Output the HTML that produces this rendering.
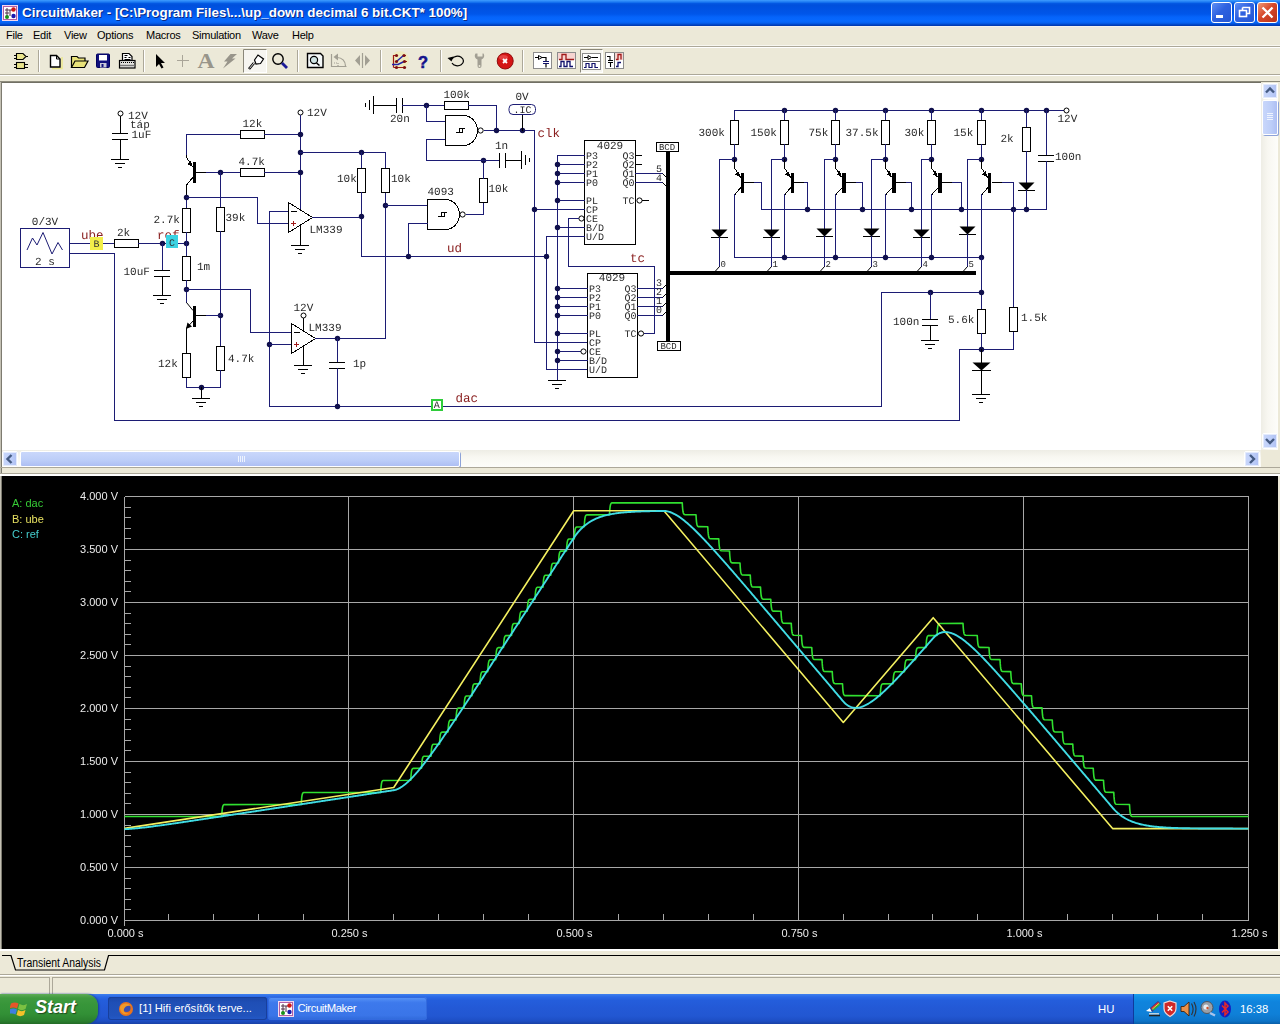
<!DOCTYPE html>
<html><head><meta charset="utf-8"><title>CircuitMaker</title>
<style>

html,body{margin:0;padding:0;overflow:hidden;}
html{width:1280px;height:1024px;}
body{width:1280px;height:1024px;overflow:hidden;position:relative;background:#ece9d8;
 font-family:"Liberation Sans",sans-serif;font-size:11px;color:#000;}
div,span,svg{position:absolute;box-sizing:border-box;}
#title{left:0;top:0;width:1280px;height:26px;
 background:linear-gradient(to bottom,#3f9dff 0px,#2f8cf8 1px,#1470ee 2.5px,#0458e2 3.5px,#0050dc 5px,#0052e2 9px,#0056ea 14px,#0564fa 17px,#0668ff 21px,#0560f0 23px,#0048cc 24.5px,#0034a8 26px);}
#title .ttl{left:22px;top:5px;color:#fff;font-size:13.38px;font-weight:bold;letter-spacing:0px;white-space:nowrap;
 text-shadow:1px 1px 0 #0a2a86;}
.tb{top:2px;width:21px;height:21px;border:1px solid #fff;border-radius:3px;
 background:linear-gradient(135deg,#5e8ff5 0%,#2f62e0 45%,#2456d4 100%);}
.tb.close{background:linear-gradient(135deg,#ef9a78 0%,#d6482a 45%,#b8321a 100%);}
#menu{left:0;top:26px;width:1280px;height:20px;background:#ece9d8;}
#menu span{top:3px;font-size:11px;letter-spacing:-0.25px;white-space:nowrap;color:#000;}
#tbar{left:0;top:47px;width:1280px;height:29px;background:#ece9d8;}
.hl{left:0;width:1280px;height:1px;}
.sep{top:50px;width:2px;height:22px;border-left:1px solid #aca899;border-right:1px solid #fff;}
#schem{left:2px;top:82px;width:1259px;height:368px;background:#fff;border-top:1px solid #716f64;overflow:hidden;}
#schem svg{left:-2px;top:-83px;will-change:transform;}
#plot{left:2px;top:476px;width:1276px;height:473px;background:#000;overflow:hidden;}
#plot svg{left:-2px;top:-476px;will-change:transform;}
.sbtrack{background:#f3f2ea;}
.sbbtn{width:16px;height:16px;border:1px solid #fff;border-radius:2px;background:linear-gradient(to right,#c9d7fb,#bccdf8 60%,#aebff3);box-shadow:0 0 0 1px #e4ebfc inset;}
.sbthumb{border:1px solid #fff;border-radius:2px;background:linear-gradient(to right,#c9d7fb,#bccdf8 60%,#aebff3);box-shadow:1px 1px 0 #8da2d8;}
.sbthumbh{border:1px solid #fff;border-radius:2px;background:linear-gradient(to bottom,#c9d7fb,#bccdf8 60%,#aebff3);box-shadow:1px 1px 0 #8da2d8;}
#task{left:0;top:994px;width:1280px;height:30px;
 background:linear-gradient(to bottom,#3f80ee 0px,#2a68e6 3px,#245edc 6px,#2359d6 14px,#2257d2 22px,#1d4ec4 27px,#1941a5 30px);}
#start{left:0;top:0;width:98px;height:30px;border-radius:0 12px 12px 0;
 background:linear-gradient(to bottom,#5eac56 0px,#3f9a3f 4px,#38963a 10px,#329036 20px,#2a7f2e 27px,#236b27 30px);
 box-shadow:1px 0 2px #1a3f9a;}
#start .st{left:35px;top:3px;color:#fff;font-size:18px;font-weight:bold;font-style:italic;text-shadow:1px 1px 1px #1e4a1e;letter-spacing:0px;}
.tbtn{top:3px;height:23px;border-radius:3px;color:#fff;font-size:11.3px;white-space:nowrap;}
#tray{left:1133px;top:0;width:147px;height:30px;border-left:1px solid #0f3a9c;
 background:linear-gradient(to bottom,#1ba0ee 0px,#1290e6 3px,#0f84dd 8px,#0f80d8 20px,#0d74c8 27px,#0a5fa8 30px);}
</style></head>
<body>
<div id="title"><svg width="16" height="16" viewBox="0 0 16 16" style="left:2px;top:5px"><rect x="0" y="0" width="16" height="16" fill="#f4d8ee"/><rect x="1.500" y="1.500" width="13" height="13" fill="#fff" stroke="#b060a8" stroke-width="1"/><path d="M3 5h8M3 8h4M5 3v9M8 5v6" stroke="#503048" stroke-width="1" fill="none"/><circle cx="11.500" cy="4.500" r="2.200" fill="#d01818"/><circle cx="11.500" cy="11" r="2.200" fill="#1818b0"/><circle cx="5" cy="12" r="2" fill="#189018"/></svg><span class="ttl">CircuitMaker - [C:\Program Files\...\up_down decimal 6 bit.CKT* 100%]</span><div class="tb" style="left:1211px"><svg width="19" height="19" viewBox="0 0 19 19" style="left:0;top:0"><rect x="4" y="12" width="7" height="3" fill="#fff"/></svg></div><div class="tb" style="left:1234px"><svg width="19" height="19" viewBox="0 0 19 19" style="left:0;top:0"><path d="M7.500 4.500h7v6h-3M7.500 4.500v3" fill="none" stroke="#fff" stroke-width="1.600"/><rect x="4.500" y="7.500" width="7" height="6" fill="none" stroke="#fff" stroke-width="1.600"/></svg></div><div class="tb close" style="left:1257px"><svg width="19" height="19" viewBox="0 0 19 19" style="left:0;top:0"><path d="M4.500 4.500l10 10M14.500 4.500l-10 10" stroke="#fff" stroke-width="2.300"/></svg></div></div>
<div id="menu"><span style="left:6px">File</span><span style="left:33px">Edit</span><span style="left:64px">View</span><span style="left:97px">Options</span><span style="left:146px">Macros</span><span style="left:192px">Simulation</span><span style="left:252px">Wave</span><span style="left:292px">Help</span></div>
<div class="hl" style="top:26px;background:#f2f1ee"></div><div class="hl" style="top:27px;height:2px;background:#eae8df"></div><div class="hl" style="top:45px;background:#f8f7f0"></div><div class="hl" style="top:46px;background:#aca899;z-index:3"></div><div class="hl" style="top:47px;background:#fff;z-index:3"></div><div id="tbar"></div><svg width="1280" height="30" viewBox="0 46 1280 30" style="left:0;top:46px"><g stroke="#000" stroke-width="1.100" fill="#e9e48c"><path d="M16.500 53.500h6.500l3 3-3 3h-6.500z"/><path d="M13.500 55.500h3M13.500 58.500h3M26 56.500h2" fill="none" shape-rendering="crispEdges"/><rect x="16.500" y="62.500" width="8" height="6"/><path d="M13.500 64.500h3M13.500 67.500h3M24.500 64.500h3M24.500 67.500h3" fill="none" shape-rendering="crispEdges"/></g><path d="M62 57v11.500h-10" fill="none" stroke="#ece88a" stroke-width="1.500"/><path d="M50.500 55.500h6l3.500 3.500v8h-9.500z" fill="#fff" stroke="#000" stroke-width="1.400"/><path d="M56.500 55.500v3.500h3.500" fill="none" stroke="#000" stroke-width="1"/><path d="M71.500 67.500v-11h5.500l1.500 1.500h6.500v3" fill="#e8e27a" stroke="#000" stroke-width="1.200"/><path d="M71.500 67.500l3.500-6.500h13l-3.500 6.500z" fill="#e8e27a" stroke="#000" stroke-width="1.200"/><rect x="96.500" y="54" width="13" height="13.500" rx="1" fill="#10107c" stroke="#000060" stroke-width="1"/><rect x="99" y="55" width="8" height="5.500" fill="#fff"/><rect x="100" y="63" width="6.500" height="4.500" fill="#c8c8d8"/><rect x="101.500" y="64" width="2" height="3" fill="#10107c"/><path d="M122.500 60.500v-7h6.500l3 3v4" fill="#fff" stroke="#000" stroke-width="1.200"/><path d="M124.500 55.500h3M124.500 57.500h2M128.500 57.500h2M124.500 59.500h6" stroke="#000" stroke-width="1"/><rect x="119.500" y="60.500" width="15.500" height="7.500" fill="#e4e4e0" stroke="#000" stroke-width="1.200"/><path d="M121 62.500h13" stroke="#000" stroke-width="1" stroke-dasharray="1 1"/><path d="M120 65.500h14.500" stroke="#777" stroke-width="1.400"/><path d="M156 54v13l3-3 2.500 4.500 2-1-2.500-4.500h4z" fill="#000"/><path d="M176.500 60.500h12M182.500 54.500v12" stroke="#a9a598" stroke-width="1" shape-rendering="crispEdges"/><text x="197.500" y="68" font-family="Liberation Serif" font-weight="bold" font-size="20.500" fill="#98958a" textLength="17" lengthAdjust="spacingAndGlyphs">A</text><path d="M230.500 54h6.500l-5 4.500h3.500l-12.500 10 4.500-7h-3.500z" fill="#98958a"/><rect x="243.500" y="49.500" width="23" height="23" fill="#f6f5f0" stroke="#fff"/><path d="M243.500 72.500v-23h23" fill="none" stroke="#8a8779" stroke-width="1"/><path d="M249 69l5-6" stroke="#000" stroke-width="2.600" fill="none"/><path d="M249.500 68.400l4.500-5.400" stroke="#fff" stroke-width="0.900" fill="none"/><path d="M254.500 60l3.500-5 5.500 4-3 4.500-4.500 .5z" fill="#fff" stroke="#000" stroke-width="1.200"/><circle cx="278" cy="59" r="5.200" fill="none" stroke="#000" stroke-width="1.400"/><path d="M282 63l5 5" stroke="#1c1c98" stroke-width="2.800"/><path d="M307.500 53.500h13l2.500 2.500v11.500h-15.500z" fill="#f4f8f8" stroke="#000" stroke-width="1.400"/><circle cx="314" cy="60" r="3.600" fill="#cfe4e4" stroke="#000" stroke-width="1.200"/><path d="M316.500 63l3 2.500" stroke="#000" stroke-width="1.600"/><g fill="none" stroke="#a29f93" stroke-width="1.200"><path d="M331.500 54v12.500h15"/><path d="M337 57.500c5 0 8.500 3.500 8.500 8.500"/><path d="M334 63h4v3.500" stroke-dasharray="1 1"/></g><path d="M333.500 57l4.500-3.500v7z" fill="#a29f93"/><path d="M360 55l-5 5.500 5 5.500zM365 55l5 5.500-5 5.500z" fill="#a29f93"/><path d="M362.500 53v15" stroke="#a29f93" stroke-width="1.200"/><circle cx="400" cy="60" r="9" fill="#f4ec9c" opacity="0.450"/><g fill="none" stroke-width="1.200"><path d="M393.500 55v12.500M393.500 55.500h3M393.500 67.500h12M403 55.500h3M403 61.500h4" stroke="#a01818"/><path d="M397 61l6.500-5.500M392 64.500h6l6-3" stroke="#2424a8" stroke-width="1.500"/></g><g fill="#7c1010"><circle cx="396.500" cy="55.500" r="1.600"/><circle cx="404" cy="55.500" r="1.600"/><circle cx="396.500" cy="61.500" r="1.600"/><circle cx="404.500" cy="61.500" r="1.600"/><circle cx="396.500" cy="67.500" r="1.600"/><circle cx="404.500" cy="67.500" r="1.600"/></g><text x="418" y="67.500" font-family="Liberation Sans" font-weight="bold" font-size="16.500" fill="#14148c" stroke="#14148c" stroke-width="0.500">?</text><path d="M452 59a6 4.800 0 1 1 0 4" fill="none" stroke="#000" stroke-width="1.200"/><path d="M447.500 58l6-1.500-2 5z" fill="#000"/><path d="M475.500 53.500c-1.500 2.500-.5 5 2 6v6.500a2 2 0 0 0 4 0v-6.500c2.500-1 3.500-3.500 2-6l-1 0v3h-5v-3z" fill="#a29f93"/><circle cx="479.500" cy="66" r="0.900" fill="#ece9d8"/><circle cx="505.200" cy="61" r="8" fill="#d41414" stroke="#900c0c" stroke-width="1"/><ellipse cx="503.500" cy="57.500" rx="4.500" ry="2.500" fill="#f06060" opacity="0.600"/><path d="M503 59l4 4M507 59l-4 4" stroke="#fff" stroke-width="1.800"/><rect x="533.500" y="52.500" width="18" height="16" fill="#fff" stroke="#8c8c8c" stroke-width="1"/><path d="M535 57.500h3M542 57.500h4v4" fill="none" stroke="#000" stroke-width="1.200"/><path d="M543 61.500h6M543 63.500h6" stroke="#10106c" stroke-width="1.200"/><path d="M546 64v3.500" stroke="#000" stroke-width="1.200"/><path d="M538.500 55.500l3.500 2-3.500 2z" fill="#fff" stroke="#000" stroke-width="1"/><rect x="557.500" y="52.500" width="18" height="16" fill="#fff" stroke="#8c8c8c" stroke-width="1"/><rect x="558" y="53" width="17" height="7" fill="#f6d4d0"/><path d="M559 59.500h3v-5h4v5h8" fill="none" stroke="#a01818" stroke-width="1.300"/><path d="M559 66.500h2v-5h3v5h3v-5h3v5h3" fill="none" stroke="#10106c" stroke-width="1.300"/><rect x="580.500" y="49.500" width="22" height="23" fill="#f6f5f0" stroke="#fff"/><path d="M580.500 72.500v-23h22" fill="none" stroke="#8a8779" stroke-width="1"/><rect x="582.500" y="53.500" width="18" height="16" fill="#fff" stroke="#8c8c8c" stroke-width="1"/><path d="M584 57.500h4M592 57.500h6" fill="none" stroke="#000" stroke-width="1.100"/><path d="M583 61.500h17" stroke="#666" stroke-width="1"/><path d="M588 55.500l3.500 2-3.500 2z" fill="#fff" stroke="#000" stroke-width="1"/><path d="M584 67.500h2v-4h3v4h3v-4h3v4h3" fill="none" stroke="#10106c" stroke-width="1.200"/><rect x="605.500" y="52.500" width="18" height="16" fill="#fff" stroke="#8c8c8c" stroke-width="1"/><path d="M607 56.500h3v4M608 60.500h5M608 62.500h5M610.500 63v4" fill="none" stroke="#000" stroke-width="1.100"/><path d="M614.500 53v16" stroke="#666" stroke-width="1"/><rect x="615" y="53" width="8" height="7" fill="#f6d4d0"/><path d="M616 59.500h2v-5h3v5" fill="none" stroke="#a01818" stroke-width="1.300"/><path d="M616 66.500h2v-4h3" fill="none" stroke="#10106c" stroke-width="1.300"/></svg><div class="sep" style="left:38px"></div><div class="sep" style="left:143px"></div><div class="sep" style="left:297px"></div><div class="sep" style="left:380px"></div><div class="sep" style="left:440px"></div><div class="sep" style="left:522px"></div><div class="hl" style="top:74px;background:#aca899"></div><div class="hl" style="top:75px;background:#fff"></div>
<div style="left:0;top:81px;width:1280px;height:1px;background:#8e8c7d"></div><div style="left:0;top:82px;width:1px;height:868px;background:#c4c1b4"></div><div style="left:1px;top:82px;width:1px;height:868px;background:#7d7b70"></div><div class="sbtrack" style="left:1261px;top:83px;width:17px;height:367px;background:linear-gradient(to right,#eeede5,#f8f7f1 40%,#fdfdfa)"></div><div class="sbbtn" style="left:1262px;top:83px"><svg width="14" height="14" viewBox="0 0 14 14" style="left:0;top:0"><path d="M3 8.500l4-4 4 4" fill="none" stroke="#445a82" stroke-width="2.4"/></svg></div><div class="sbthumb" style="left:1262px;top:100px;width:16px;height:35px"><svg width="14" height="33" viewBox="0 0 14 33" style="left:0;top:0"><path d="M4 12.500h6M4 14.500h6M4 16.500h6M4 18.500h6" stroke="#eef3fe" stroke-width="1"/></svg></div><div class="sbbtn" style="left:1262px;top:433px"><svg width="14" height="14" viewBox="0 0 14 14" style="left:0;top:0"><path d="M3 5l4 4 4-4" fill="none" stroke="#445a82" stroke-width="2.4"/></svg></div><div class="sbtrack" style="left:2px;top:450px;width:1259px;height:17px;background:linear-gradient(to bottom,#eeede5,#f8f7f1 40%,#fdfdfa)"></div><div class="sbbtn" style="left:2px;top:451px"><svg width="14" height="14" viewBox="0 0 14 14" style="left:0;top:0"><path d="M8.500 3l-4 4 4 4" fill="none" stroke="#445a82" stroke-width="2.4"/></svg></div><div class="sbthumbh" style="left:20px;top:451px;width:440px;height:16px"><svg width="438" height="14" viewBox="0 0 438 14" style="left:0;top:0"><path d="M217.500 4v6M219.500 4v6M221.500 4v6M223.500 4v6" stroke="#eef3fe" stroke-width="1"/></svg></div><div class="sbbtn" style="left:1244px;top:451px"><svg width="14" height="14" viewBox="0 0 14 14" style="left:0;top:0"><path d="M5 3l4 4-4 4" fill="none" stroke="#445a82" stroke-width="2.4"/></svg></div><div style="left:1261px;top:450px;width:17px;height:17px;background:#ece9d8"></div><div class="hl" style="top:467px;background:#aca899"></div><div class="hl" style="top:473px;background:#aca899"></div><div class="hl" style="top:474px;height:2px;background:#fff"></div>
<div id="schem"><svg width="1280" height="1024" viewBox="0 0 1280 1024" shape-rendering="crispEdges" text-rendering="geometricPrecision"><rect x="20.5" y="228.5" width="49" height="39" fill="#fff" stroke="#1c1c74" stroke-width="1"/><path d="M27 250 L32.500 238 L37 245 L43 232.500 L52 254 L58 242.500 L62.500 250" fill="none" stroke="#1c1c74" stroke-width="1" shape-rendering="auto"/><text x="45" y="225" font-family="Liberation Mono" font-size="11" fill="#2a2a2a" text-anchor="middle" font-weight="normal">0/3V</text><text x="45" y="264.5" font-family="Liberation Mono" font-size="11" fill="#2a2a2a" text-anchor="middle" font-weight="normal">2 s</text><text x="81" y="239" font-family="Liberation Mono" font-size="12.5" fill="#8a2020" text-anchor="start" font-weight="normal">ube</text><path d="M69.5 243.5 L114.5 243.5" fill="none" stroke="#1c1c74" stroke-width="1" stroke-linecap="square"/><rect x="90.5" y="237.5" width="12" height="12" fill="#f2ee4a" stroke="#f2ee4a" stroke-width="1"/><text x="96.5" y="247" font-family="Liberation Mono" font-size="10" fill="#333" text-anchor="middle" font-weight="normal">B</text><rect x="114.5" y="239.5" width="24" height="8" fill="#fff" stroke="#000" stroke-width="1"/><text x="117" y="236" font-family="Liberation Mono" font-size="11" fill="#2a2a2a" text-anchor="start" font-weight="normal">2k</text><path d="M138.5 243.5 L186.5 243.5" fill="none" stroke="#1c1c74" stroke-width="1" stroke-linecap="square"/><text x="157" y="239" font-family="Liberation Mono" font-size="12.5" fill="#8a2020" text-anchor="start" font-weight="normal">ref</text><rect x="166.5" y="235.5" width="11" height="12" fill="#3ad2e2" stroke="#3ad2e2" stroke-width="1"/><text x="172" y="245.5" font-family="Liberation Mono" font-size="10" fill="#333" text-anchor="middle" font-weight="normal">C</text><circle cx="162.5" cy="243.5" r="2.7" fill="#10104c" shape-rendering="auto"/><circle cx="186.5" cy="243.5" r="2.7" fill="#10104c" shape-rendering="auto"/><path d="M69.5 253.5 L114.5 253.5 L114.5 420.5 L959.5 420.5 L959.5 349.5 L1013.5 349.5 L1013.5 331.5" fill="none" stroke="#1c1c74" stroke-width="1" stroke-linecap="square"/><path d="M162.5 243.5 L162.5 270.5" fill="none" stroke="#1c1c74" stroke-width="1" stroke-linecap="square"/><path d="M154.5 270.5 L169.5 270.5" fill="none" stroke="#000" stroke-width="1" stroke-linecap="square"/><path d="M154.5 276.5 L169.5 276.5" fill="none" stroke="#000" stroke-width="1" stroke-linecap="square"/><path d="M162.5 276.5 L162.5 295.5" fill="none" stroke="#000" stroke-width="1" stroke-linecap="square"/><path d="M153.5 295.5 L170.5 295.5" fill="none" stroke="#000" stroke-width="1" stroke-linecap="square"/><path d="M157.5 299.5 L166.5 299.5" fill="none" stroke="#000" stroke-width="1" stroke-linecap="square"/><path d="M160.5 303.5 L163.5 303.5" fill="none" stroke="#000" stroke-width="1" stroke-linecap="square"/><text x="123.5" y="275" font-family="Liberation Mono" font-size="11" fill="#2a2a2a" text-anchor="start" font-weight="normal">10uF</text><circle cx="120.5" cy="113.5" r="2.5" fill="#fff" stroke="#000" stroke-width="1" shape-rendering="auto"/><path d="M120.5 116.5 L120.5 133.5" fill="none" stroke="#000" stroke-width="1" stroke-linecap="square"/><path d="M112.5 133.5 L127.5 133.5" fill="none" stroke="#000" stroke-width="1" stroke-linecap="square"/><path d="M112.5 139.5 L127.5 139.5" fill="none" stroke="#000" stroke-width="1" stroke-linecap="square"/><path d="M120.5 139.5 L120.5 159.5" fill="none" stroke="#000" stroke-width="1" stroke-linecap="square"/><path d="M111.5 159.5 L128.5 159.5" fill="none" stroke="#000" stroke-width="1" stroke-linecap="square"/><path d="M115.5 163.5 L124.5 163.5" fill="none" stroke="#000" stroke-width="1" stroke-linecap="square"/><path d="M118.5 167.5 L121.5 167.5" fill="none" stroke="#000" stroke-width="1" stroke-linecap="square"/><text x="128" y="119" font-family="Liberation Mono" font-size="11" fill="#2a2a2a" text-anchor="start" font-weight="normal">12V</text><text x="130" y="128" font-family="Liberation Mono" font-size="11" fill="#2a2a2a" text-anchor="start" font-weight="normal">táp</text><text x="131.5" y="137.5" font-family="Liberation Mono" font-size="11" fill="#2a2a2a" text-anchor="start" font-weight="normal">1uF</text><path d="M186.5 155.5 L186.5 134.5 L240.5 134.5" fill="none" stroke="#1c1c74" stroke-width="1" stroke-linecap="square"/><rect x="240.5" y="130.5" width="24" height="8" fill="#fff" stroke="#000" stroke-width="1"/><path d="M264.5 134.5 L300.5 134.5" fill="none" stroke="#1c1c74" stroke-width="1" stroke-linecap="square"/><text x="242.5" y="127" font-family="Liberation Mono" font-size="11" fill="#2a2a2a" text-anchor="start" font-weight="normal">12k</text><rect x="193" y="162" width="3.4" height="20.5" fill="#000"/><path d="M186.5 155.5 L186.5 157.5" fill="none" stroke="#000" stroke-width="1" stroke-linecap="square"/><path d="M186.5 157.5 L193 167.25" stroke="#000" stroke-width="1" fill="none"/><path d="M193 167.25 L187.5 164.25 L190.5 160.75 Z" fill="#000"/><path d="M193 177.25 L186.5 185" stroke="#000" stroke-width="1" fill="none"/><path d="M186.5 185.5 L186.5 197.5" fill="none" stroke="#000" stroke-width="1" stroke-linecap="square"/><path d="M186.5 197.5 L186.5 208.5" fill="none" stroke="#1c1c74" stroke-width="1" stroke-linecap="square"/><circle cx="186.5" cy="197.5" r="2.7" fill="#10104c" shape-rendering="auto"/><path d="M196.5 172.5 L206.5 172.5" fill="none" stroke="#000" stroke-width="1" stroke-linecap="square"/><path d="M206.5 172.5 L240.5 172.5" fill="none" stroke="#1c1c74" stroke-width="1" stroke-linecap="square"/><rect x="240.5" y="168.5" width="24" height="8" fill="#fff" stroke="#000" stroke-width="1"/><path d="M264.5 172.5 L300.5 172.5" fill="none" stroke="#1c1c74" stroke-width="1" stroke-linecap="square"/><circle cx="220.5" cy="172.5" r="2.7" fill="#10104c" shape-rendering="auto"/><text x="238.5" y="164.5" font-family="Liberation Mono" font-size="11" fill="#2a2a2a" text-anchor="start" font-weight="normal">4.7k</text><circle cx="300.5" cy="112.5" r="2.5" fill="#fff" stroke="#000" stroke-width="1" shape-rendering="auto"/><path d="M300.5 115.5 L300.5 210.5" fill="none" stroke="#1c1c74" stroke-width="1" stroke-linecap="square"/><circle cx="300.5" cy="134.5" r="2.7" fill="#10104c" shape-rendering="auto"/><circle cx="300.5" cy="152.5" r="2.7" fill="#10104c" shape-rendering="auto"/><circle cx="300.5" cy="172.5" r="2.7" fill="#10104c" shape-rendering="auto"/><text x="307" y="116" font-family="Liberation Mono" font-size="11" fill="#2a2a2a" text-anchor="start" font-weight="normal">12V</text><path d="M186.5 197.5 L257.5 197.5 L257.5 223.5 L288.5 223.5" fill="none" stroke="#1c1c74" stroke-width="1" stroke-linecap="square"/><rect x="182.5" y="208.5" width="8" height="24" fill="#fff" stroke="#000" stroke-width="1"/><text x="153.5" y="222.5" font-family="Liberation Mono" font-size="11" fill="#2a2a2a" text-anchor="start" font-weight="normal">2.7k</text><path d="M186.5 232.5 L186.5 256.5" fill="none" stroke="#1c1c74" stroke-width="1" stroke-linecap="square"/><rect x="182.5" y="256.5" width="8" height="24" fill="#fff" stroke="#000" stroke-width="1"/><text x="197" y="269.5" font-family="Liberation Mono" font-size="11" fill="#2a2a2a" text-anchor="start" font-weight="normal">1m</text><path d="M186.5 280.5 L186.5 302.5" fill="none" stroke="#1c1c74" stroke-width="1" stroke-linecap="square"/><circle cx="186.5" cy="289.5" r="2.7" fill="#10104c" shape-rendering="auto"/><path d="M186.5 289.5 L250.5 289.5 L250.5 332.5 L291.5 332.5" fill="none" stroke="#1c1c74" stroke-width="1" stroke-linecap="square"/><path d="M220.5 172.5 L220.5 207.5" fill="none" stroke="#1c1c74" stroke-width="1" stroke-linecap="square"/><rect x="216.5" y="207.5" width="8" height="24" fill="#fff" stroke="#000" stroke-width="1"/><text x="225.5" y="220.5" font-family="Liberation Mono" font-size="11" fill="#2a2a2a" text-anchor="start" font-weight="normal">39k</text><path d="M220.5 231.5 L220.5 346.5" fill="none" stroke="#1c1c74" stroke-width="1" stroke-linecap="square"/><circle cx="220.5" cy="315.5" r="2.7" fill="#10104c" shape-rendering="auto"/><rect x="216.5" y="346.5" width="8" height="24" fill="#fff" stroke="#000" stroke-width="1"/><text x="228" y="361.5" font-family="Liberation Mono" font-size="11" fill="#2a2a2a" text-anchor="start" font-weight="normal">4.7k</text><path d="M220.5 370.5 L220.5 387.5 L186.5 387.5 L186.5 377.5" fill="none" stroke="#1c1c74" stroke-width="1" stroke-linecap="square"/><rect x="193" y="305.500" width="3.400" height="21" fill="#000"/><path d="M186.500 302.500 L193 310.500" stroke="#000" fill="none" stroke-width="1" shape-rendering="auto"/><path d="M193 321 L186.500 328" stroke="#000" fill="none" stroke-width="1" shape-rendering="auto"/><path d="M186 329 L187.500 322.500 L192 326.500 Z" fill="#000" shape-rendering="auto"/><path d="M196.5 315.5 L206.5 315.5" fill="none" stroke="#000" stroke-width="1" stroke-linecap="square"/><path d="M206.5 315.5 L220.5 315.5" fill="none" stroke="#1c1c74" stroke-width="1" stroke-linecap="square"/><path d="M186.5 328.5 L186.5 353.5" fill="none" stroke="#000" stroke-width="1" stroke-linecap="square"/><rect x="182.5" y="353.5" width="8" height="24" fill="#fff" stroke="#000" stroke-width="1"/><text x="158" y="366.5" font-family="Liberation Mono" font-size="11" fill="#2a2a2a" text-anchor="start" font-weight="normal">12k</text><circle cx="201.5" cy="387.5" r="2.7" fill="#10104c" shape-rendering="auto"/><path d="M201.5 387.5 L201.5 398.5" fill="none" stroke="#000" stroke-width="1" stroke-linecap="square"/><path d="M192.5 398.5 L209.5 398.5" fill="none" stroke="#000" stroke-width="1" stroke-linecap="square"/><path d="M196.5 402.5 L205.5 402.5" fill="none" stroke="#000" stroke-width="1" stroke-linecap="square"/><path d="M199.5 406.5 L202.5 406.5" fill="none" stroke="#000" stroke-width="1" stroke-linecap="square"/><path d="M269.5 211.5 L288.5 211.5" fill="none" stroke="#1c1c74" stroke-width="1" stroke-linecap="square"/><path d="M269.5 211.5 L269.5 406.5 L881.5 406.5 L881.5 292.5 L981.5 292.5" fill="none" stroke="#1c1c74" stroke-width="1" stroke-linecap="square"/><path d="M288.5 202.5 L312.5 217.5 L288.5 232.5 Z" fill="#fff" stroke="#000" stroke-width="1"/><path d="M291.5 211.5 L296.5 211.5" fill="none" stroke="#000" stroke-width="1" stroke-linecap="square"/><path d="M291 223.5h5M293.5 221v5" stroke="#a01818" fill="none"/><path d="M300.5 210.5 L300.5 210.5" fill="none" stroke="#000" stroke-width="1" stroke-linecap="square"/><path d="M300.5 225.5 L300.5 245.5" fill="none" stroke="#000" stroke-width="1" stroke-linecap="square"/><path d="M291.5 245.5 L308.5 245.5" fill="none" stroke="#000" stroke-width="1" stroke-linecap="square"/><path d="M295.5 249.5 L304.5 249.5" fill="none" stroke="#000" stroke-width="1" stroke-linecap="square"/><path d="M298.5 253.5 L301.5 253.5" fill="none" stroke="#000" stroke-width="1" stroke-linecap="square"/><text x="309.5" y="232.5" font-family="Liberation Mono" font-size="11" fill="#2a2a2a" text-anchor="start" font-weight="normal">LM339</text><path d="M312.5 217.5 L361.5 217.5" fill="none" stroke="#1c1c74" stroke-width="1" stroke-linecap="square"/><circle cx="269.5" cy="344.5" r="2.7" fill="#10104c" shape-rendering="auto"/><path d="M269.5 344.5 L291.5 344.5" fill="none" stroke="#1c1c74" stroke-width="1" stroke-linecap="square"/><path d="M291.5 323.5 L315.5 338.5 L291.5 353.5 Z" fill="#fff" stroke="#000" stroke-width="1"/><path d="M294.5 332.5 L299.5 332.5" fill="none" stroke="#000" stroke-width="1" stroke-linecap="square"/><path d="M294 344.5h5M296.5 342v5" stroke="#a01818" fill="none"/><circle cx="303.5" cy="315.5" r="2.5" fill="#fff" stroke="#000" stroke-width="1" shape-rendering="auto"/><path d="M303.5 318.5 L303.5 330.5" fill="none" stroke="#000" stroke-width="1" stroke-linecap="square"/><path d="M303.5 346.5 L303.5 365.5" fill="none" stroke="#000" stroke-width="1" stroke-linecap="square"/><path d="M294.5 365.5 L311.5 365.5" fill="none" stroke="#000" stroke-width="1" stroke-linecap="square"/><path d="M298.5 369.5 L307.5 369.5" fill="none" stroke="#000" stroke-width="1" stroke-linecap="square"/><path d="M301.5 373.5 L304.5 373.5" fill="none" stroke="#000" stroke-width="1" stroke-linecap="square"/><text x="293.5" y="310.5" font-family="Liberation Mono" font-size="11" fill="#2a2a2a" text-anchor="start" font-weight="normal">12V</text><text x="308.5" y="331" font-family="Liberation Mono" font-size="11" fill="#2a2a2a" text-anchor="start" font-weight="normal">LM339</text><path d="M315.5 338.5 L385.5 338.5 L385.5 192.5" fill="none" stroke="#1c1c74" stroke-width="1" stroke-linecap="square"/><circle cx="337.5" cy="338.5" r="2.7" fill="#10104c" shape-rendering="auto"/><path d="M337.5 338.5 L337.5 362.5" fill="none" stroke="#1c1c74" stroke-width="1" stroke-linecap="square"/><path d="M329.5 362.5 L344.5 362.5" fill="none" stroke="#000" stroke-width="1" stroke-linecap="square"/><path d="M329.5 368.5 L344.5 368.5" fill="none" stroke="#000" stroke-width="1" stroke-linecap="square"/><path d="M337.5 368.5 L337.5 406.5" fill="none" stroke="#1c1c74" stroke-width="1" stroke-linecap="square"/><circle cx="337.5" cy="406.5" r="2.7" fill="#10104c" shape-rendering="auto"/><text x="353" y="367" font-family="Liberation Mono" font-size="11" fill="#2a2a2a" text-anchor="start" font-weight="normal">1p</text><path d="M300.5 152.5 L385.5 152.5 L385.5 168.5" fill="none" stroke="#1c1c74" stroke-width="1" stroke-linecap="square"/><circle cx="361.5" cy="152.5" r="2.7" fill="#10104c" shape-rendering="auto"/><path d="M361.5 152.5 L361.5 168.5" fill="none" stroke="#1c1c74" stroke-width="1" stroke-linecap="square"/><rect x="357.5" y="168.5" width="8" height="24" fill="#fff" stroke="#000" stroke-width="1"/><rect x="381.5" y="168.5" width="8" height="24" fill="#fff" stroke="#000" stroke-width="1"/><text x="337" y="182" font-family="Liberation Mono" font-size="11" fill="#2a2a2a" text-anchor="start" font-weight="normal">10k</text><text x="391" y="182" font-family="Liberation Mono" font-size="11" fill="#2a2a2a" text-anchor="start" font-weight="normal">10k</text><path d="M361.5 192.5 L361.5 256.5 L546.5 256.5" fill="none" stroke="#1c1c74" stroke-width="1" stroke-linecap="square"/><circle cx="361.5" cy="216.5" r="2.7" fill="#10104c" shape-rendering="auto"/><circle cx="385.5" cy="205.5" r="2.7" fill="#10104c" shape-rendering="auto"/><path d="M385.5 205.5 L427.5 205.5" fill="none" stroke="#1c1c74" stroke-width="1" stroke-linecap="square"/><path d="M427.5 199.5 H445.5 A14 15 0 0 1 445.5 229.5 H427.5 Z" fill="#fff" stroke="#000" stroke-width="1"/><circle cx="462.6" cy="214.5" r="2.6" fill="#fff" stroke="#000" stroke-width="1" shape-rendering="auto"/><path d="M438.5 216.5 L443.5 216.5" fill="none" stroke="#000" stroke-width="1" stroke-linecap="square"/><path d="M441.5 212.5 L446.5 212.5" fill="none" stroke="#000" stroke-width="1" stroke-linecap="square"/><path d="M441.5 212.5 L441.5 216.5" fill="none" stroke="#000" stroke-width="1" stroke-linecap="square"/><path d="M444.5 212.5 L444.5 216.5" fill="none" stroke="#000" stroke-width="1" stroke-linecap="square"/><text x="427.5" y="194.5" font-family="Liberation Mono" font-size="11" fill="#2a2a2a" text-anchor="start" font-weight="normal">4093</text><path d="M427.5 223.5 L408.5 223.5 L408.5 256.5" fill="none" stroke="#1c1c74" stroke-width="1" stroke-linecap="square"/><circle cx="408.5" cy="256.5" r="2.7" fill="#10104c" shape-rendering="auto"/><path d="M466.5 214.5 L483.5 214.5 L483.5 202.5" fill="none" stroke="#1c1c74" stroke-width="1" stroke-linecap="square"/><rect x="479.5" y="178.5" width="8" height="24" fill="#fff" stroke="#000" stroke-width="1"/><text x="488.5" y="192" font-family="Liberation Mono" font-size="11" fill="#2a2a2a" text-anchor="start" font-weight="normal">10k</text><path d="M483.5 178.5 L483.5 160.5" fill="none" stroke="#1c1c74" stroke-width="1" stroke-linecap="square"/><circle cx="483.5" cy="160.5" r="2.7" fill="#10104c" shape-rendering="auto"/><text x="447" y="252" font-family="Liberation Mono" font-size="12.5" fill="#8a2020" text-anchor="start" font-weight="normal">ud</text><path d="M373.5 96.5 L373.5 113.5" fill="none" stroke="#000" stroke-width="1" stroke-linecap="square"/><path d="M369.5 100.5 L369.5 109.5" fill="none" stroke="#000" stroke-width="1" stroke-linecap="square"/><path d="M365.5 103.5 L365.5 106.5" fill="none" stroke="#000" stroke-width="1" stroke-linecap="square"/><path d="M373.5 105.5 L396.5 105.5" fill="none" stroke="#000" stroke-width="1" stroke-linecap="square"/><path d="M396.5 98.5 L396.5 112.5" fill="none" stroke="#000" stroke-width="1" stroke-linecap="square"/><path d="M402.5 98.5 L402.5 112.5" fill="none" stroke="#000" stroke-width="1" stroke-linecap="square"/><path d="M402.5 105.5 L444.5 105.5" fill="none" stroke="#1c1c74" stroke-width="1" stroke-linecap="square"/><circle cx="426.5" cy="105.5" r="2.7" fill="#10104c" shape-rendering="auto"/><text x="390" y="121.5" font-family="Liberation Mono" font-size="11" fill="#2a2a2a" text-anchor="start" font-weight="normal">20n</text><rect x="444.5" y="101.5" width="24" height="8" fill="#fff" stroke="#000" stroke-width="1"/><text x="443.5" y="98" font-family="Liberation Mono" font-size="11" fill="#2a2a2a" text-anchor="start" font-weight="normal">100k</text><path d="M468.5 105.5 L496.5 105.5 L496.5 130.5" fill="none" stroke="#1c1c74" stroke-width="1" stroke-linecap="square"/><path d="M426.5 105.5 L426.5 121.5 L445.5 121.5" fill="none" stroke="#1c1c74" stroke-width="1" stroke-linecap="square"/><path d="M445.5 139.5 L426.5 139.5 L426.5 160.5 L499.5 160.5" fill="none" stroke="#1c1c74" stroke-width="1" stroke-linecap="square"/><path d="M445.5 115.5 H463.5 A14 15 0 0 1 463.5 145.5 H445.5 Z" fill="#fff" stroke="#000" stroke-width="1"/><circle cx="480.6" cy="130.5" r="2.6" fill="#fff" stroke="#000" stroke-width="1" shape-rendering="auto"/><path d="M456.5 132.5 L461.5 132.5" fill="none" stroke="#000" stroke-width="1" stroke-linecap="square"/><path d="M459.5 128.5 L464.5 128.5" fill="none" stroke="#000" stroke-width="1" stroke-linecap="square"/><path d="M459.5 128.5 L459.5 132.5" fill="none" stroke="#000" stroke-width="1" stroke-linecap="square"/><path d="M462.5 128.5 L462.5 132.5" fill="none" stroke="#000" stroke-width="1" stroke-linecap="square"/><path d="M484.5 130.5 L534.5 130.5 L534.5 342.5 L587.5 342.5" fill="none" stroke="#1c1c74" stroke-width="1" stroke-linecap="square"/><circle cx="496.5" cy="130.5" r="2.7" fill="#10104c" shape-rendering="auto"/><circle cx="522.5" cy="130.5" r="2.7" fill="#10104c" shape-rendering="auto"/><path d="M499.5 153.5 L499.5 167.5" fill="none" stroke="#000" stroke-width="1" stroke-linecap="square"/><path d="M505.5 153.5 L505.5 167.5" fill="none" stroke="#000" stroke-width="1" stroke-linecap="square"/><path d="M505.5 160.5 L521.5 160.5" fill="none" stroke="#000" stroke-width="1" stroke-linecap="square"/><path d="M521.5 151.5 L521.5 168.5" fill="none" stroke="#000" stroke-width="1" stroke-linecap="square"/><path d="M525.5 155.5 L525.5 164.5" fill="none" stroke="#000" stroke-width="1" stroke-linecap="square"/><path d="M529.5 158.5 L529.5 161.5" fill="none" stroke="#000" stroke-width="1" stroke-linecap="square"/><text x="495" y="149" font-family="Liberation Mono" font-size="11" fill="#2a2a2a" text-anchor="start" font-weight="normal">1n</text><path d="M522.5 114.5 L522.5 130.5" fill="none" stroke="#000" stroke-width="1" stroke-linecap="square"/><rect x="509" y="104.500" width="26.500" height="10" rx="4" fill="#fff" stroke="#1c1c74" stroke-width="1" shape-rendering="auto"/><text x="522.5" y="113" font-family="Liberation Mono" font-size="10" fill="#2a2a2a" text-anchor="middle" font-weight="normal">.IC</text><text x="515.5" y="99.5" font-family="Liberation Mono" font-size="11" fill="#2a2a2a" text-anchor="start" font-weight="normal">0V</text><text x="537.5" y="136.5" font-family="Liberation Mono" font-size="12.5" fill="#8a2020" text-anchor="start" font-weight="normal">clk</text><rect x="584.5" y="140.5" width="51" height="104" fill="#fff" stroke="#000" stroke-width="1"/><text x="610" y="148.5" font-family="Liberation Mono" font-size="11" fill="#2a2a2a" text-anchor="middle" font-weight="normal">4029</text><text x="586" y="158.5" font-family="Liberation Mono" font-size="10" fill="#2a2a2a" text-anchor="start" font-weight="normal">P3</text><text x="586" y="167.5" font-family="Liberation Mono" font-size="10" fill="#2a2a2a" text-anchor="start" font-weight="normal">P2</text><text x="586" y="176.5" font-family="Liberation Mono" font-size="10" fill="#2a2a2a" text-anchor="start" font-weight="normal">P1</text><text x="586" y="185.5" font-family="Liberation Mono" font-size="10" fill="#2a2a2a" text-anchor="start" font-weight="normal">P0</text><text x="586" y="203.5" font-family="Liberation Mono" font-size="10" fill="#2a2a2a" text-anchor="start" font-weight="normal">PL</text><text x="586" y="212.5" font-family="Liberation Mono" font-size="10" fill="#2a2a2a" text-anchor="start" font-weight="normal">CP</text><text x="586" y="221.5" font-family="Liberation Mono" font-size="10" fill="#2a2a2a" text-anchor="start" font-weight="normal">CE</text><text x="586" y="230.5" font-family="Liberation Mono" font-size="10" fill="#2a2a2a" text-anchor="start" font-weight="normal">B/D</text><text x="586" y="239.5" font-family="Liberation Mono" font-size="10" fill="#2a2a2a" text-anchor="start" font-weight="normal">U/D</text><text x="634.5" y="158.5" font-family="Liberation Mono" font-size="10" fill="#2a2a2a" text-anchor="end" font-weight="normal">Q3</text><text x="634.5" y="167.5" font-family="Liberation Mono" font-size="10" fill="#2a2a2a" text-anchor="end" font-weight="normal">Q2</text><text x="634.5" y="176.5" font-family="Liberation Mono" font-size="10" fill="#2a2a2a" text-anchor="end" font-weight="normal">Q1</text><text x="634.5" y="185.5" font-family="Liberation Mono" font-size="10" fill="#2a2a2a" text-anchor="end" font-weight="normal">Q0</text><text x="634.5" y="204" font-family="Liberation Mono" font-size="10" fill="#2a2a2a" text-anchor="end" font-weight="normal">TC</text><path d="M557.5 155.5 L557.5 380.5" fill="none" stroke="#1c1c74" stroke-width="1" stroke-linecap="square"/><path d="M557.5 155.5 L584.5 155.5" fill="none" stroke="#1c1c74" stroke-width="1" stroke-linecap="square"/><path d="M557.5 164.5 L584.5 164.5" fill="none" stroke="#1c1c74" stroke-width="1" stroke-linecap="square"/><path d="M557.5 173.5 L584.5 173.5" fill="none" stroke="#1c1c74" stroke-width="1" stroke-linecap="square"/><path d="M557.5 182.5 L584.5 182.5" fill="none" stroke="#1c1c74" stroke-width="1" stroke-linecap="square"/><path d="M557.5 200.5 L584.5 200.5" fill="none" stroke="#1c1c74" stroke-width="1" stroke-linecap="square"/><path d="M557.5 227.5 L584.5 227.5" fill="none" stroke="#1c1c74" stroke-width="1" stroke-linecap="square"/><circle cx="557.5" cy="164.5" r="2.7" fill="#10104c" shape-rendering="auto"/><circle cx="557.5" cy="173.5" r="2.7" fill="#10104c" shape-rendering="auto"/><circle cx="557.5" cy="182.5" r="2.7" fill="#10104c" shape-rendering="auto"/><circle cx="557.5" cy="200.5" r="2.7" fill="#10104c" shape-rendering="auto"/><circle cx="557.5" cy="227.5" r="2.7" fill="#10104c" shape-rendering="auto"/><path d="M534.5 209.5 L584.5 209.5" fill="none" stroke="#1c1c74" stroke-width="1" stroke-linecap="square"/><circle cx="534.5" cy="209.5" r="2.7" fill="#10104c" shape-rendering="auto"/><path d="M584.5 236.5 L546.5 236.5 L546.5 369.5 L587.5 369.5" fill="none" stroke="#1c1c74" stroke-width="1" stroke-linecap="square"/><circle cx="546.5" cy="256.5" r="2.7" fill="#10104c" shape-rendering="auto"/><circle cx="581.500" cy="218.500" r="2.600" fill="#fff" stroke="#000" shape-rendering="auto"/><path d="M578.5 218.5 L568.5 218.5 L568.5 266.5 L654.5 266.5 L654.5 333.5 L644.5 333.5" fill="none" stroke="#1c1c74" stroke-width="1" stroke-linecap="square"/><text x="630" y="262" font-family="Liberation Mono" font-size="12.5" fill="#8a2020" text-anchor="start" font-weight="normal">tc</text><path d="M635.5 155.5 L641.5 155.5" fill="none" stroke="#000" stroke-width="1" stroke-linecap="square"/><path d="M635.5 164.5 L641.5 164.5" fill="none" stroke="#000" stroke-width="1" stroke-linecap="square"/><path d="M635.5 173.5 L662.5 173.5" fill="none" stroke="#1c1c74" stroke-width="1" stroke-linecap="square"/><path d="M635.5 182.5 L662.5 182.5" fill="none" stroke="#1c1c74" stroke-width="1" stroke-linecap="square"/><path d="M662.500 173.500 L667 178 M662.500 182.500 L667 187" stroke="#000" fill="none" shape-rendering="auto"/><text x="656" y="171.5" font-family="Liberation Mono" font-size="10" fill="#2a2a2a" text-anchor="start" font-weight="normal">5</text><text x="656" y="181" font-family="Liberation Mono" font-size="10" fill="#2a2a2a" text-anchor="start" font-weight="normal">4</text><circle cx="639.500" cy="200.500" r="2.600" fill="#fff" stroke="#000" shape-rendering="auto"/><path d="M642.5 200.5 L648.5 200.5" fill="none" stroke="#000" stroke-width="1" stroke-linecap="square"/><rect x="587.5" y="273.5" width="50" height="104" fill="#fff" stroke="#000" stroke-width="1"/><text x="612" y="281" font-family="Liberation Mono" font-size="11" fill="#2a2a2a" text-anchor="middle" font-weight="normal">4029</text><text x="589" y="291.5" font-family="Liberation Mono" font-size="10" fill="#2a2a2a" text-anchor="start" font-weight="normal">P3</text><text x="589" y="300.5" font-family="Liberation Mono" font-size="10" fill="#2a2a2a" text-anchor="start" font-weight="normal">P2</text><text x="589" y="309.5" font-family="Liberation Mono" font-size="10" fill="#2a2a2a" text-anchor="start" font-weight="normal">P1</text><text x="589" y="318.5" font-family="Liberation Mono" font-size="10" fill="#2a2a2a" text-anchor="start" font-weight="normal">P0</text><text x="589" y="336.5" font-family="Liberation Mono" font-size="10" fill="#2a2a2a" text-anchor="start" font-weight="normal">PL</text><text x="589" y="345.5" font-family="Liberation Mono" font-size="10" fill="#2a2a2a" text-anchor="start" font-weight="normal">CP</text><text x="589" y="354.5" font-family="Liberation Mono" font-size="10" fill="#2a2a2a" text-anchor="start" font-weight="normal">CE</text><text x="589" y="363.5" font-family="Liberation Mono" font-size="10" fill="#2a2a2a" text-anchor="start" font-weight="normal">B/D</text><text x="589" y="372.5" font-family="Liberation Mono" font-size="10" fill="#2a2a2a" text-anchor="start" font-weight="normal">U/D</text><text x="636.5" y="291.5" font-family="Liberation Mono" font-size="10" fill="#2a2a2a" text-anchor="end" font-weight="normal">Q3</text><path d="M637.5 288.5 L662.5 288.5" fill="none" stroke="#1c1c74" stroke-width="1" stroke-linecap="square"/><text x="636.5" y="300.5" font-family="Liberation Mono" font-size="10" fill="#2a2a2a" text-anchor="end" font-weight="normal">Q2</text><path d="M637.5 297.5 L662.5 297.5" fill="none" stroke="#1c1c74" stroke-width="1" stroke-linecap="square"/><text x="636.5" y="309.5" font-family="Liberation Mono" font-size="10" fill="#2a2a2a" text-anchor="end" font-weight="normal">Q1</text><path d="M637.5 306.5 L662.5 306.5" fill="none" stroke="#1c1c74" stroke-width="1" stroke-linecap="square"/><text x="636.5" y="318.5" font-family="Liberation Mono" font-size="10" fill="#2a2a2a" text-anchor="end" font-weight="normal">Q0</text><path d="M637.5 315.5 L662.5 315.5" fill="none" stroke="#1c1c74" stroke-width="1" stroke-linecap="square"/><text x="636.5" y="336.5" font-family="Liberation Mono" font-size="10" fill="#2a2a2a" text-anchor="end" font-weight="normal">TC</text><path d="M662.500 288.500 l4.500 -4.500 M662.500 297.500 l4.500 -4.500 M662.500 306.500 l4.500 -4.500 M662.500 315.500 l4.500 -4.500" stroke="#000" fill="none" shape-rendering="auto"/><text x="656" y="286" font-family="Liberation Mono" font-size="10" fill="#2a2a2a" text-anchor="start" font-weight="normal">3</text><text x="656" y="295" font-family="Liberation Mono" font-size="10" fill="#2a2a2a" text-anchor="start" font-weight="normal">2</text><text x="656" y="304" font-family="Liberation Mono" font-size="10" fill="#2a2a2a" text-anchor="start" font-weight="normal">1</text><text x="656" y="313" font-family="Liberation Mono" font-size="10" fill="#2a2a2a" text-anchor="start" font-weight="normal">0</text><path d="M557.5 288.5 L587.5 288.5" fill="none" stroke="#1c1c74" stroke-width="1" stroke-linecap="square"/><circle cx="557.5" cy="288.5" r="2.7" fill="#10104c" shape-rendering="auto"/><path d="M557.5 297.5 L587.5 297.5" fill="none" stroke="#1c1c74" stroke-width="1" stroke-linecap="square"/><circle cx="557.5" cy="297.5" r="2.7" fill="#10104c" shape-rendering="auto"/><path d="M557.5 306.5 L587.5 306.5" fill="none" stroke="#1c1c74" stroke-width="1" stroke-linecap="square"/><circle cx="557.5" cy="306.5" r="2.7" fill="#10104c" shape-rendering="auto"/><path d="M557.5 315.5 L587.5 315.5" fill="none" stroke="#1c1c74" stroke-width="1" stroke-linecap="square"/><circle cx="557.5" cy="315.5" r="2.7" fill="#10104c" shape-rendering="auto"/><path d="M557.5 333.5 L587.5 333.5" fill="none" stroke="#1c1c74" stroke-width="1" stroke-linecap="square"/><circle cx="557.5" cy="333.5" r="2.7" fill="#10104c" shape-rendering="auto"/><path d="M557.5 360.5 L587.5 360.5" fill="none" stroke="#1c1c74" stroke-width="1" stroke-linecap="square"/><circle cx="557.5" cy="360.5" r="2.7" fill="#10104c" shape-rendering="auto"/><path d="M557.5 351.5 L580.5 351.5" fill="none" stroke="#1c1c74" stroke-width="1" stroke-linecap="square"/><circle cx="557.5" cy="351.5" r="2.7" fill="#10104c" shape-rendering="auto"/><circle cx="583.500" cy="351.500" r="2.600" fill="#fff" stroke="#000" shape-rendering="auto"/><circle cx="641" cy="333.500" r="2.600" fill="#fff" stroke="#000" shape-rendering="auto"/><path d="M548.5 380.5 L565.5 380.5" fill="none" stroke="#000" stroke-width="1" stroke-linecap="square"/><path d="M552.5 384.5 L561.5 384.5" fill="none" stroke="#000" stroke-width="1" stroke-linecap="square"/><path d="M555.5 388.5 L558.5 388.5" fill="none" stroke="#000" stroke-width="1" stroke-linecap="square"/><rect x="665.500" y="151" width="4" height="190" fill="#000"/><rect x="667" y="270.500" width="309" height="4" fill="#000"/><rect x="656.5" y="142.5" width="22" height="9" fill="#fff" stroke="#000" stroke-width="1"/><text x="667" y="150" font-family="Liberation Mono" font-size="9" fill="#2a2a2a" text-anchor="middle" font-weight="normal">BCD</text><rect x="657.5" y="341.5" width="23" height="9" fill="#fff" stroke="#000" stroke-width="1"/><text x="668.5" y="349" font-family="Liberation Mono" font-size="9" fill="#2a2a2a" text-anchor="middle" font-weight="normal">BCD</text><path d="M734.5 110.5 L1063.5 110.5" fill="none" stroke="#1c1c74" stroke-width="1" stroke-linecap="square"/><circle cx="1066.5" cy="110.5" r="2.5" fill="#fff" stroke="#000" stroke-width="1" shape-rendering="auto"/><text x="1057.5" y="122" font-family="Liberation Mono" font-size="11" fill="#2a2a2a" text-anchor="start" font-weight="normal">12V</text><path d="M734.5 257.5 L981.5 257.5" fill="none" stroke="#1c1c74" stroke-width="1" stroke-linecap="square"/><path d="M761.5 209.5 L1046.5 209.5" fill="none" stroke="#1c1c74" stroke-width="1" stroke-linecap="square"/><path d="M734.5 110.5 L734.5 120.5" fill="none" stroke="#1c1c74" stroke-width="1" stroke-linecap="square"/><rect x="730.5" y="120.5" width="8" height="24" fill="#fff" stroke="#000" stroke-width="1"/><text x="698.5" y="135.5" font-family="Liberation Mono" font-size="11" fill="#2a2a2a" text-anchor="start" font-weight="normal">300k</text><path d="M734.5 144.5 L734.5 159.5" fill="none" stroke="#1c1c74" stroke-width="1" stroke-linecap="square"/><circle cx="734.5" cy="159.5" r="2.7" fill="#10104c" shape-rendering="auto"/><path d="M734.5 159.5 L719.5 159.5 L719.5 229.5" fill="none" stroke="#1c1c74" stroke-width="1" stroke-linecap="square"/><rect x="740.7" y="172.5" width="3.4" height="20" fill="#000"/><path d="M734.5 159.5 L734.5 168" fill="none" stroke="#000" stroke-width="1" stroke-linecap="square"/><path d="M734.5 168 L740.7 177.5" stroke="#000" stroke-width="1" fill="none"/><path d="M740.7 177.5 L735.2 174.5 L738.2 171 Z" fill="#000"/><path d="M740.7 187.5 L734.5 195" stroke="#000" stroke-width="1" fill="none"/><path d="M734.5 194.5 L734.5 257.5" fill="none" stroke="#1c1c74" stroke-width="1" stroke-linecap="square"/><path d="M744.5 182.5 L754.5 182.5" fill="none" stroke="#000" stroke-width="1" stroke-linecap="square"/><path d="M754.5 182.5 L761.5 182.5 L761.5 209.5" fill="none" stroke="#1c1c74" stroke-width="1" stroke-linecap="square"/><path d="M711.5 229.5 L727.5 229.5 L719.5 237.5 Z" fill="#000" shape-rendering="auto"/><path d="M711.5 237.5 L727.5 237.5" fill="none" stroke="#000" stroke-width="1" stroke-linecap="square"/><path d="M719.5 237.5 L719.5 266.5" fill="none" stroke="#1c1c74" stroke-width="1" stroke-linecap="square"/><path d="M719.5 266.500 l-4 4.500" stroke="#000" fill="none" shape-rendering="auto"/><text x="720.5" y="267" font-family="Liberation Mono" font-size="9" fill="#2a2a2a" text-anchor="start" font-weight="normal">0</text><circle cx="784.5" cy="110.5" r="2.7" fill="#10104c" shape-rendering="auto"/><path d="M784.5 110.5 L784.5 120.5" fill="none" stroke="#1c1c74" stroke-width="1" stroke-linecap="square"/><rect x="780.5" y="120.5" width="8" height="24" fill="#fff" stroke="#000" stroke-width="1"/><text x="750.5" y="135.5" font-family="Liberation Mono" font-size="11" fill="#2a2a2a" text-anchor="start" font-weight="normal">150k</text><path d="M784.5 144.5 L784.5 159.5" fill="none" stroke="#1c1c74" stroke-width="1" stroke-linecap="square"/><circle cx="784.5" cy="159.5" r="2.7" fill="#10104c" shape-rendering="auto"/><path d="M784.5 159.5 L771.5 159.5 L771.5 229.5" fill="none" stroke="#1c1c74" stroke-width="1" stroke-linecap="square"/><rect x="790.7" y="172.5" width="3.4" height="20" fill="#000"/><path d="M784.5 159.5 L784.5 168" fill="none" stroke="#000" stroke-width="1" stroke-linecap="square"/><path d="M784.5 168 L790.7 177.5" stroke="#000" stroke-width="1" fill="none"/><path d="M790.7 177.5 L785.2 174.5 L788.2 171 Z" fill="#000"/><path d="M790.7 187.5 L784.5 195" stroke="#000" stroke-width="1" fill="none"/><path d="M784.5 194.5 L784.5 257.5" fill="none" stroke="#1c1c74" stroke-width="1" stroke-linecap="square"/><circle cx="784.5" cy="257.5" r="2.7" fill="#10104c" shape-rendering="auto"/><path d="M794.5 182.5 L804.5 182.5" fill="none" stroke="#000" stroke-width="1" stroke-linecap="square"/><path d="M804.5 182.5 L807.5 182.5 L807.5 209.5" fill="none" stroke="#1c1c74" stroke-width="1" stroke-linecap="square"/><circle cx="807.5" cy="209.5" r="2.7" fill="#10104c" shape-rendering="auto"/><path d="M763.5 229.5 L779.5 229.5 L771.5 237.5 Z" fill="#000" shape-rendering="auto"/><path d="M763.5 237.5 L779.5 237.5" fill="none" stroke="#000" stroke-width="1" stroke-linecap="square"/><path d="M771.5 237.5 L771.5 266.5" fill="none" stroke="#1c1c74" stroke-width="1" stroke-linecap="square"/><path d="M771.5 266.500 l-4 4.500" stroke="#000" fill="none" shape-rendering="auto"/><text x="772.5" y="267" font-family="Liberation Mono" font-size="9" fill="#2a2a2a" text-anchor="start" font-weight="normal">1</text><circle cx="835.5" cy="110.5" r="2.7" fill="#10104c" shape-rendering="auto"/><path d="M835.5 110.5 L835.5 120.5" fill="none" stroke="#1c1c74" stroke-width="1" stroke-linecap="square"/><rect x="831.5" y="120.5" width="8" height="24" fill="#fff" stroke="#000" stroke-width="1"/><text x="808.5" y="135.5" font-family="Liberation Mono" font-size="11" fill="#2a2a2a" text-anchor="start" font-weight="normal">75k</text><path d="M835.5 144.5 L835.5 159.5" fill="none" stroke="#1c1c74" stroke-width="1" stroke-linecap="square"/><circle cx="835.5" cy="159.5" r="2.7" fill="#10104c" shape-rendering="auto"/><path d="M835.5 159.5 L824.5 159.5 L824.5 228.5" fill="none" stroke="#1c1c74" stroke-width="1" stroke-linecap="square"/><rect x="842.2" y="172.5" width="3.4" height="20" fill="#000"/><path d="M835.5 159.5 L835.5 168" fill="none" stroke="#000" stroke-width="1" stroke-linecap="square"/><path d="M835.5 168 L842.2 177.5" stroke="#000" stroke-width="1" fill="none"/><path d="M842.2 177.5 L836.7 174.5 L839.7 171 Z" fill="#000"/><path d="M842.2 187.5 L835.5 195" stroke="#000" stroke-width="1" fill="none"/><path d="M835.5 194.5 L835.5 257.5" fill="none" stroke="#1c1c74" stroke-width="1" stroke-linecap="square"/><circle cx="835.5" cy="257.5" r="2.7" fill="#10104c" shape-rendering="auto"/><path d="M846.5 182.5 L856.5 182.5" fill="none" stroke="#000" stroke-width="1" stroke-linecap="square"/><path d="M856.5 182.5 L862.5 182.5 L862.5 209.5" fill="none" stroke="#1c1c74" stroke-width="1" stroke-linecap="square"/><circle cx="862.5" cy="209.5" r="2.7" fill="#10104c" shape-rendering="auto"/><path d="M816.5 228.5 L832.5 228.5 L824.5 236.5 Z" fill="#000" shape-rendering="auto"/><path d="M816.5 236.5 L832.5 236.5" fill="none" stroke="#000" stroke-width="1" stroke-linecap="square"/><path d="M824.5 236.5 L824.5 266.5" fill="none" stroke="#1c1c74" stroke-width="1" stroke-linecap="square"/><path d="M824.5 266.500 l-4 4.500" stroke="#000" fill="none" shape-rendering="auto"/><text x="825.5" y="267" font-family="Liberation Mono" font-size="9" fill="#2a2a2a" text-anchor="start" font-weight="normal">2</text><circle cx="885.5" cy="110.5" r="2.7" fill="#10104c" shape-rendering="auto"/><path d="M885.5 110.5 L885.5 120.5" fill="none" stroke="#1c1c74" stroke-width="1" stroke-linecap="square"/><rect x="881.5" y="120.5" width="8" height="24" fill="#fff" stroke="#000" stroke-width="1"/><text x="845.5" y="135.5" font-family="Liberation Mono" font-size="11" fill="#2a2a2a" text-anchor="start" font-weight="normal">37.5k</text><path d="M885.5 144.5 L885.5 159.5" fill="none" stroke="#1c1c74" stroke-width="1" stroke-linecap="square"/><circle cx="885.5" cy="159.5" r="2.7" fill="#10104c" shape-rendering="auto"/><path d="M885.5 159.5 L871.5 159.5 L871.5 228.5" fill="none" stroke="#1c1c74" stroke-width="1" stroke-linecap="square"/><rect x="892.2" y="172.5" width="3.4" height="20" fill="#000"/><path d="M885.5 159.5 L885.5 168" fill="none" stroke="#000" stroke-width="1" stroke-linecap="square"/><path d="M885.5 168 L892.2 177.5" stroke="#000" stroke-width="1" fill="none"/><path d="M892.2 177.5 L886.7 174.5 L889.7 171 Z" fill="#000"/><path d="M892.2 187.5 L885.5 195" stroke="#000" stroke-width="1" fill="none"/><path d="M885.5 194.5 L885.5 257.5" fill="none" stroke="#1c1c74" stroke-width="1" stroke-linecap="square"/><circle cx="885.5" cy="257.5" r="2.7" fill="#10104c" shape-rendering="auto"/><path d="M896.5 182.5 L906.5 182.5" fill="none" stroke="#000" stroke-width="1" stroke-linecap="square"/><path d="M906.5 182.5 L911.5 182.5 L911.5 209.5" fill="none" stroke="#1c1c74" stroke-width="1" stroke-linecap="square"/><circle cx="911.5" cy="209.5" r="2.7" fill="#10104c" shape-rendering="auto"/><path d="M863.5 228.5 L879.5 228.5 L871.5 236.5 Z" fill="#000" shape-rendering="auto"/><path d="M863.5 236.5 L879.5 236.5" fill="none" stroke="#000" stroke-width="1" stroke-linecap="square"/><path d="M871.5 236.5 L871.5 266.5" fill="none" stroke="#1c1c74" stroke-width="1" stroke-linecap="square"/><path d="M871.5 266.500 l-4 4.500" stroke="#000" fill="none" shape-rendering="auto"/><text x="872.5" y="267" font-family="Liberation Mono" font-size="9" fill="#2a2a2a" text-anchor="start" font-weight="normal">3</text><circle cx="931.5" cy="110.5" r="2.7" fill="#10104c" shape-rendering="auto"/><path d="M931.5 110.5 L931.5 120.5" fill="none" stroke="#1c1c74" stroke-width="1" stroke-linecap="square"/><rect x="927.5" y="120.5" width="8" height="24" fill="#fff" stroke="#000" stroke-width="1"/><text x="904.5" y="135.5" font-family="Liberation Mono" font-size="11" fill="#2a2a2a" text-anchor="start" font-weight="normal">30k</text><path d="M931.5 144.5 L931.5 159.5" fill="none" stroke="#1c1c74" stroke-width="1" stroke-linecap="square"/><circle cx="931.5" cy="159.5" r="2.7" fill="#10104c" shape-rendering="auto"/><path d="M931.5 159.5 L921.5 159.5 L921.5 229.5" fill="none" stroke="#1c1c74" stroke-width="1" stroke-linecap="square"/><rect x="938.2" y="172.5" width="3.4" height="20" fill="#000"/><path d="M931.5 159.5 L931.5 168" fill="none" stroke="#000" stroke-width="1" stroke-linecap="square"/><path d="M931.5 168 L938.2 177.5" stroke="#000" stroke-width="1" fill="none"/><path d="M938.2 177.5 L932.7 174.5 L935.7 171 Z" fill="#000"/><path d="M938.2 187.5 L931.5 195" stroke="#000" stroke-width="1" fill="none"/><path d="M931.5 194.5 L931.5 257.5" fill="none" stroke="#1c1c74" stroke-width="1" stroke-linecap="square"/><circle cx="931.5" cy="257.5" r="2.7" fill="#10104c" shape-rendering="auto"/><path d="M942.5 182.5 L952.5 182.5" fill="none" stroke="#000" stroke-width="1" stroke-linecap="square"/><path d="M952.5 182.5 L961.5 182.5 L961.5 209.5" fill="none" stroke="#1c1c74" stroke-width="1" stroke-linecap="square"/><circle cx="961.5" cy="209.5" r="2.7" fill="#10104c" shape-rendering="auto"/><path d="M913.5 229.5 L929.5 229.5 L921.5 237.5 Z" fill="#000" shape-rendering="auto"/><path d="M913.5 237.5 L929.5 237.5" fill="none" stroke="#000" stroke-width="1" stroke-linecap="square"/><path d="M921.5 237.5 L921.5 266.5" fill="none" stroke="#1c1c74" stroke-width="1" stroke-linecap="square"/><path d="M921.5 266.500 l-4 4.500" stroke="#000" fill="none" shape-rendering="auto"/><text x="922.5" y="267" font-family="Liberation Mono" font-size="9" fill="#2a2a2a" text-anchor="start" font-weight="normal">4</text><circle cx="981.5" cy="110.5" r="2.7" fill="#10104c" shape-rendering="auto"/><path d="M981.5 110.5 L981.5 120.5" fill="none" stroke="#1c1c74" stroke-width="1" stroke-linecap="square"/><rect x="977.5" y="120.5" width="8" height="24" fill="#fff" stroke="#000" stroke-width="1"/><text x="953.5" y="135.5" font-family="Liberation Mono" font-size="11" fill="#2a2a2a" text-anchor="start" font-weight="normal">15k</text><path d="M981.5 144.5 L981.5 159.5" fill="none" stroke="#1c1c74" stroke-width="1" stroke-linecap="square"/><circle cx="981.5" cy="159.5" r="2.7" fill="#10104c" shape-rendering="auto"/><path d="M981.5 159.5 L967.5 159.5 L967.5 226.5" fill="none" stroke="#1c1c74" stroke-width="1" stroke-linecap="square"/><rect x="988" y="172.5" width="3.4" height="20" fill="#000"/><path d="M981.5 159.5 L981.5 168" fill="none" stroke="#000" stroke-width="1" stroke-linecap="square"/><path d="M981.5 168 L988 177.5" stroke="#000" stroke-width="1" fill="none"/><path d="M988 177.5 L982.5 174.5 L985.5 171 Z" fill="#000"/><path d="M988 187.5 L981.5 195" stroke="#000" stroke-width="1" fill="none"/><path d="M981.5 194.5 L981.5 257.5" fill="none" stroke="#1c1c74" stroke-width="1" stroke-linecap="square"/><circle cx="981.5" cy="257.5" r="2.7" fill="#10104c" shape-rendering="auto"/><path d="M992.5 182.5 L1002.5 182.5" fill="none" stroke="#000" stroke-width="1" stroke-linecap="square"/><path d="M1002.5 182.5 L1013.5 182.5 L1013.5 209.5" fill="none" stroke="#1c1c74" stroke-width="1" stroke-linecap="square"/><circle cx="1013.5" cy="209.5" r="2.7" fill="#10104c" shape-rendering="auto"/><path d="M959.5 226.5 L975.5 226.5 L967.5 234.5 Z" fill="#000" shape-rendering="auto"/><path d="M959.5 234.5 L975.5 234.5" fill="none" stroke="#000" stroke-width="1" stroke-linecap="square"/><path d="M967.5 234.5 L967.5 266.5" fill="none" stroke="#1c1c74" stroke-width="1" stroke-linecap="square"/><path d="M967.5 266.500 l-4 4.500" stroke="#000" fill="none" shape-rendering="auto"/><text x="968.5" y="267" font-family="Liberation Mono" font-size="9" fill="#2a2a2a" text-anchor="start" font-weight="normal">5</text><circle cx="1026.5" cy="110.5" r="2.7" fill="#10104c" shape-rendering="auto"/><circle cx="1046.5" cy="110.5" r="2.7" fill="#10104c" shape-rendering="auto"/><path d="M1026.5 110.5 L1026.5 127.5" fill="none" stroke="#1c1c74" stroke-width="1" stroke-linecap="square"/><rect x="1022.5" y="127.5" width="8" height="24" fill="#fff" stroke="#000" stroke-width="1"/><text x="1000.5" y="141.5" font-family="Liberation Mono" font-size="11" fill="#2a2a2a" text-anchor="start" font-weight="normal">2k</text><path d="M1026.5 151.5 L1026.5 182.5" fill="none" stroke="#1c1c74" stroke-width="1" stroke-linecap="square"/><path d="M1018.5 182.5 L1034.5 182.5 L1026.5 190.5 Z" fill="#000" shape-rendering="auto"/><path d="M1018.5 190.5 L1034.5 190.5" fill="none" stroke="#000" stroke-width="1" stroke-linecap="square"/><path d="M1026.5 190.5 L1026.5 209.5" fill="none" stroke="#1c1c74" stroke-width="1" stroke-linecap="square"/><circle cx="1026.5" cy="209.5" r="2.7" fill="#10104c" shape-rendering="auto"/><path d="M1046.5 110.5 L1046.5 155.5" fill="none" stroke="#1c1c74" stroke-width="1" stroke-linecap="square"/><path d="M1038.5 155.5 L1053.5 155.5" fill="none" stroke="#000" stroke-width="1" stroke-linecap="square"/><path d="M1038.5 161.5 L1053.5 161.5" fill="none" stroke="#000" stroke-width="1" stroke-linecap="square"/><path d="M1046.5 161.5 L1046.5 209.5" fill="none" stroke="#1c1c74" stroke-width="1" stroke-linecap="square"/><text x="1055" y="159.5" font-family="Liberation Mono" font-size="11" fill="#2a2a2a" text-anchor="start" font-weight="normal">100n</text><path d="M981.5 257.5 L981.5 309.5" fill="none" stroke="#1c1c74" stroke-width="1" stroke-linecap="square"/><circle cx="981.5" cy="292.5" r="2.7" fill="#10104c" shape-rendering="auto"/><rect x="977.5" y="309.5" width="8" height="24" fill="#fff" stroke="#000" stroke-width="1"/><text x="948" y="323" font-family="Liberation Mono" font-size="11" fill="#2a2a2a" text-anchor="start" font-weight="normal">5.6k</text><path d="M981.5 333.5 L981.5 349.5" fill="none" stroke="#1c1c74" stroke-width="1" stroke-linecap="square"/><circle cx="981.5" cy="349.5" r="2.7" fill="#10104c" shape-rendering="auto"/><path d="M981.5 349.5 L981.5 362.5" fill="none" stroke="#000" stroke-width="1" stroke-linecap="square"/><path d="M972.5 362.5 L990.5 362.5 L981.5 370.5 Z" fill="#000" shape-rendering="auto"/><path d="M972.5 370.5 L990.5 370.5" fill="none" stroke="#000" stroke-width="1" stroke-linecap="square"/><path d="M981.5 370.5 L981.5 394.5" fill="none" stroke="#000" stroke-width="1" stroke-linecap="square"/><path d="M972.5 394.5 L989.5 394.5" fill="none" stroke="#000" stroke-width="1" stroke-linecap="square"/><path d="M976.5 398.5 L985.5 398.5" fill="none" stroke="#000" stroke-width="1" stroke-linecap="square"/><path d="M979.5 402.5 L982.5 402.5" fill="none" stroke="#000" stroke-width="1" stroke-linecap="square"/><path d="M1013.5 209.5 L1013.5 307.5" fill="none" stroke="#1c1c74" stroke-width="1" stroke-linecap="square"/><rect x="1009.5" y="307.5" width="8" height="24" fill="#fff" stroke="#000" stroke-width="1"/><text x="1021" y="320.5" font-family="Liberation Mono" font-size="11" fill="#2a2a2a" text-anchor="start" font-weight="normal">1.5k</text><circle cx="930.5" cy="292.5" r="2.7" fill="#10104c" shape-rendering="auto"/><path d="M930.5 292.5 L930.5 319.5" fill="none" stroke="#1c1c74" stroke-width="1" stroke-linecap="square"/><path d="M922.5 319.5 L937.5 319.5" fill="none" stroke="#000" stroke-width="1" stroke-linecap="square"/><path d="M922.5 325.5 L937.5 325.5" fill="none" stroke="#000" stroke-width="1" stroke-linecap="square"/><path d="M930.5 325.5 L930.5 340.5" fill="none" stroke="#000" stroke-width="1" stroke-linecap="square"/><path d="M921.5 340.5 L938.5 340.5" fill="none" stroke="#000" stroke-width="1" stroke-linecap="square"/><path d="M925.5 344.5 L934.5 344.5" fill="none" stroke="#000" stroke-width="1" stroke-linecap="square"/><path d="M928.5 348.5 L931.5 348.5" fill="none" stroke="#000" stroke-width="1" stroke-linecap="square"/><text x="893" y="324.5" font-family="Liberation Mono" font-size="11" fill="#2a2a2a" text-anchor="start" font-weight="normal">100n</text><rect x="432" y="399.5" width="10" height="10" fill="#fff" stroke="#2ecc3a" stroke-width="2"/><text x="436.8" y="408" font-family="Liberation Mono" font-size="10" fill="#333" text-anchor="middle" font-weight="normal">A</text><text x="455.5" y="401.5" font-family="Liberation Mono" font-size="12.5" fill="#8a2020" text-anchor="start" font-weight="normal">dac</text></svg></div>
<div id="plot"><svg width="1280" height="1024" viewBox="0 0 1280 1024"><g shape-rendering="crispEdges" stroke="#a8a8a8" stroke-width="1" fill="none"><path d="M124.5 496.5H1248.5"/><path d="M124.5 549.5H1248.5"/><path d="M124.5 602.5H1248.5"/><path d="M124.5 655.5H1248.5"/><path d="M124.5 708.5H1248.5"/><path d="M124.5 761.5H1248.5"/><path d="M124.5 814.5H1248.5"/><path d="M124.5 867.5H1248.5"/><path d="M124.5 920.5H1248.5"/><path d="M124.5 496.5V926"/><path d="M348.5 496.5V920.5"/><path d="M573.5 496.5V920.5"/><path d="M798.5 496.5V920.5"/><path d="M1023.5 496.5V920.5"/><path d="M1248.5 496.5V920.5"/><path d="M124.5 507.5h6.500"/><path d="M124.5 517.5h6.500"/><path d="M124.5 528.5h6.500"/><path d="M124.5 538.5h6.500"/><path d="M124.5 560.5h6.500"/><path d="M124.5 570.5h6.500"/><path d="M124.5 581.5h6.500"/><path d="M124.5 591.5h6.500"/><path d="M124.5 613.5h6.500"/><path d="M124.5 623.5h6.500"/><path d="M124.5 634.5h6.500"/><path d="M124.5 644.5h6.500"/><path d="M124.5 666.5h6.500"/><path d="M124.5 676.5h6.500"/><path d="M124.5 687.5h6.500"/><path d="M124.5 697.5h6.500"/><path d="M124.5 719.5h6.500"/><path d="M124.5 729.5h6.500"/><path d="M124.5 740.5h6.500"/><path d="M124.5 750.5h6.500"/><path d="M124.5 772.5h6.500"/><path d="M124.5 782.5h6.500"/><path d="M124.5 793.5h6.500"/><path d="M124.5 803.5h6.500"/><path d="M124.5 825.5h6.500"/><path d="M124.5 835.5h6.500"/><path d="M124.5 846.5h6.500"/><path d="M124.5 856.5h6.500"/><path d="M124.5 878.5h6.500"/><path d="M124.5 888.5h6.500"/><path d="M124.5 899.5h6.500"/><path d="M124.5 909.5h6.500"/><path d="M168.5 920.5v-7"/><path d="M213.5 920.5v-7"/><path d="M258.5 920.5v-7"/><path d="M303.5 920.5v-7"/><path d="M393.5 920.5v-7"/><path d="M438.5 920.5v-7"/><path d="M483.5 920.5v-7"/><path d="M528.5 920.5v-7"/><path d="M618.5 920.5v-7"/><path d="M663.5 920.5v-7"/><path d="M708.5 920.5v-7"/><path d="M753.5 920.5v-7"/><path d="M843.5 920.5v-7"/><path d="M888.5 920.5v-7"/><path d="M932.5 920.5v-7"/><path d="M977.5 920.5v-7"/><path d="M1067.5 920.5v-7"/><path d="M1112.5 920.5v-7"/><path d="M1157.5 920.5v-7"/><path d="M1202.5 920.5v-7"/></g><text x="118" y="500" text-anchor="end" font-family="Liberation Sans" font-size="11" fill="#ececec">4.000 V</text><text x="118" y="553" text-anchor="end" font-family="Liberation Sans" font-size="11" fill="#ececec">3.500 V</text><text x="118" y="606" text-anchor="end" font-family="Liberation Sans" font-size="11" fill="#ececec">3.000 V</text><text x="118" y="659" text-anchor="end" font-family="Liberation Sans" font-size="11" fill="#ececec">2.500 V</text><text x="118" y="712" text-anchor="end" font-family="Liberation Sans" font-size="11" fill="#ececec">2.000 V</text><text x="118" y="765" text-anchor="end" font-family="Liberation Sans" font-size="11" fill="#ececec">1.500 V</text><text x="118" y="818" text-anchor="end" font-family="Liberation Sans" font-size="11" fill="#ececec">1.000 V</text><text x="118" y="871" text-anchor="end" font-family="Liberation Sans" font-size="11" fill="#ececec">0.500 V</text><text x="118" y="924" text-anchor="end" font-family="Liberation Sans" font-size="11" fill="#ececec">0.000 V</text><text x="125.5" y="937" text-anchor="middle" font-family="Liberation Sans" font-size="11" fill="#ececec">0.000 s</text><text x="349.5" y="937" text-anchor="middle" font-family="Liberation Sans" font-size="11" fill="#ececec">0.250 s</text><text x="574.5" y="937" text-anchor="middle" font-family="Liberation Sans" font-size="11" fill="#ececec">0.500 s</text><text x="799.5" y="937" text-anchor="middle" font-family="Liberation Sans" font-size="11" fill="#ececec">0.750 s</text><text x="1024.5" y="937" text-anchor="middle" font-family="Liberation Sans" font-size="11" fill="#ececec">1.000 s</text><text x="1249.5" y="937" text-anchor="middle" font-family="Liberation Sans" font-size="11" fill="#ececec">1.250 s</text><text x="12" y="507" font-family="Liberation Sans" font-size="11" fill="#36cc36">A: dac</text><text x="12" y="523" font-family="Liberation Sans" font-size="11" fill="#e6e060">B: ube</text><text x="12" y="537.500" font-family="Liberation Sans" font-size="11" fill="#44cccc">C: ref</text><path d="M124.5 816.5 L221.75 816.5 L222 812.19 L222.25 809.42 L222.5 807.64 L222.75 806.49 L223 805.76 L223.25 805.28 L223.5 804.98 L223.75 804.78 L224.25 804.58 L301.25 804.43 L301.5 800.12 L301.75 797.35 L302 795.57 L302.25 794.42 L302.5 793.69 L302.75 793.21 L303 792.91 L303.25 792.71 L303.75 792.51 L380.75 792.36 L381 788.05 L381.25 785.28 L381.5 783.5 L381.75 782.35 L382 781.62 L382.25 781.14 L382.5 780.84 L382.75 780.64 L383.25 780.44 L410.75 780.29 L411 775.98 L411.25 773.21 L411.5 771.43 L411.75 770.28 L412 769.55 L412.25 769.07 L412.5 768.77 L412.75 768.57 L413.25 768.37 L421.5 768.22 L421.75 763.91 L422 761.14 L422.25 759.36 L422.5 758.21 L422.75 757.48 L423 757 L423.25 756.7 L423.5 756.5 L424 756.3 L431 756.15 L431.25 751.84 L431.5 749.07 L431.75 747.29 L432 746.14 L432.25 745.41 L432.5 744.93 L432.75 744.63 L433 744.43 L433.5 744.23 L439.5 744.08 L439.75 739.77 L440 737 L440.25 735.22 L440.5 734.07 L440.75 733.34 L441 732.86 L441.25 732.56 L441.5 732.36 L442 732.16 L448 732.01 L448.25 727.7 L448.5 724.93 L448.75 723.15 L449 722 L449.25 721.27 L449.5 720.79 L449.75 720.49 L450 720.29 L450.5 720.09 L456 719.94 L456.25 715.63 L456.5 712.86 L456.75 711.08 L457 709.93 L457.25 709.2 L457.5 708.72 L457.75 708.42 L458 708.22 L458.5 708.02 L464 707.87 L464.25 703.56 L464.5 700.79 L464.75 699.01 L465 697.86 L465.25 697.13 L465.5 696.65 L465.75 696.35 L466 696.15 L466.5 695.95 L472 695.8 L472.25 691.49 L472.5 688.72 L472.75 686.94 L473 685.79 L473.25 685.06 L473.5 684.58 L473.75 684.28 L474 684.08 L474.5 683.88 L480 683.73 L480.25 679.42 L480.5 676.65 L480.75 674.87 L481 673.72 L481.25 672.99 L481.5 672.51 L481.75 672.21 L482 672.01 L482.5 671.81 L487.75 671.66 L488 667.35 L488.25 664.58 L488.5 662.8 L488.75 661.65 L489 660.92 L489.25 660.44 L489.5 660.14 L489.75 659.94 L490.25 659.74 L495.75 659.59 L496 655.28 L496.25 652.51 L496.5 650.73 L496.75 649.58 L497 648.85 L497.25 648.37 L497.5 648.07 L497.75 647.87 L498.25 647.67 L503.5 647.52 L503.75 643.21 L504 640.44 L504.25 638.66 L504.5 637.51 L504.75 636.78 L505 636.3 L505.25 636 L505.5 635.8 L506 635.6 L511.5 635.45 L511.75 631.14 L512 628.37 L512.25 626.59 L512.5 625.44 L512.75 624.71 L513 624.23 L513.25 623.93 L513.5 623.73 L514 623.53 L519.25 623.38 L519.5 619.07 L519.75 616.3 L520 614.52 L520.25 613.37 L520.5 612.64 L520.75 612.16 L521 611.86 L521.25 611.66 L521.75 611.46 L527.25 611.31 L527.5 607 L527.75 604.23 L528 602.45 L528.25 601.3 L528.5 600.57 L528.75 600.09 L529 599.79 L529.25 599.59 L529.75 599.39 L535 599.24 L535.25 594.93 L535.5 592.16 L535.75 590.38 L536 589.23 L536.25 588.5 L536.5 588.02 L536.75 587.72 L537 587.52 L537.5 587.32 L543 587.17 L543.25 582.86 L543.5 580.09 L543.75 578.31 L544 577.16 L544.25 576.43 L544.5 575.95 L544.75 575.65 L545 575.45 L545.5 575.25 L550.75 575.1 L551 570.79 L551.25 568.02 L551.5 566.24 L551.75 565.09 L552 564.36 L552.25 563.88 L552.5 563.58 L552.75 563.38 L553.25 563.18 L558.5 563.03 L558.75 558.72 L559 555.95 L559.25 554.17 L559.5 553.02 L559.75 552.29 L560 551.81 L560.25 551.51 L560.5 551.31 L561 551.11 L566.5 550.96 L566.75 546.65 L567 543.88 L567.25 542.1 L567.5 540.95 L567.75 540.22 L568 539.74 L568.25 539.44 L568.5 539.24 L569 539.04 L574.25 538.89 L574.5 534.58 L574.75 531.81 L575 530.03 L575.25 528.88 L575.5 528.15 L575.75 527.67 L576 527.37 L576.25 527.17 L576.75 526.97 L584.25 526.82 L584.5 522.51 L584.75 519.74 L585 517.96 L585.25 516.81 L585.5 516.08 L585.75 515.6 L586 515.3 L586.25 515.1 L586.75 514.9 L609.5 514.75 L609.75 510.44 L610 507.67 L610.25 505.89 L610.5 504.74 L610.75 504.01 L611 503.53 L611.25 503.23 L611.5 503.03 L612 502.83 L682.25 502.68 L682.5 506.99 L682.75 509.76 L683 511.54 L683.25 512.69 L683.5 513.42 L683.75 513.9 L684 514.2 L684.25 514.4 L684.75 514.6 L696 514.75 L696.25 519.06 L696.5 521.83 L696.75 523.61 L697 524.76 L697.25 525.49 L697.5 525.97 L697.75 526.27 L698 526.47 L698.5 526.67 L707.75 526.82 L708 531.13 L708.25 533.9 L708.5 535.68 L708.75 536.83 L709 537.56 L709.25 538.04 L709.5 538.34 L709.75 538.54 L710.25 538.74 L718.75 538.89 L719 543.2 L719.25 545.97 L719.5 547.75 L719.75 548.9 L720 549.63 L720.25 550.11 L720.5 550.41 L720.75 550.61 L721.25 550.81 L729.5 550.96 L729.75 555.27 L730 558.04 L730.25 559.82 L730.5 560.97 L730.75 561.7 L731 562.18 L731.25 562.48 L731.5 562.68 L732 562.88 L740 563.03 L740.25 567.34 L740.5 570.11 L740.75 571.89 L741 573.04 L741.25 573.77 L741.5 574.25 L741.75 574.55 L742 574.75 L742.5 574.95 L750.25 575.1 L750.5 579.41 L750.75 582.18 L751 583.96 L751.25 585.11 L751.5 585.84 L751.75 586.32 L752 586.62 L752.25 586.82 L752.75 587.02 L760.5 587.17 L760.75 591.48 L761 594.25 L761.25 596.03 L761.5 597.18 L761.75 597.91 L762 598.39 L762.25 598.69 L762.5 598.89 L763 599.09 L770.75 599.24 L771 603.55 L771.25 606.32 L771.5 608.1 L771.75 609.25 L772 609.98 L772.25 610.46 L772.5 610.76 L772.75 610.96 L773.25 611.16 L781 611.31 L781.25 615.62 L781.5 618.39 L781.75 620.17 L782 621.32 L782.25 622.05 L782.5 622.53 L782.75 622.83 L783 623.03 L783.5 623.23 L791.25 623.38 L791.5 627.69 L791.75 630.46 L792 632.24 L792.25 633.39 L792.5 634.12 L792.75 634.6 L793 634.9 L793.25 635.1 L793.75 635.3 L801.5 635.45 L801.75 639.76 L802 642.53 L802.25 644.31 L802.5 645.46 L802.75 646.19 L803 646.67 L803.25 646.97 L803.5 647.17 L804 647.37 L811.75 647.52 L812 651.83 L812.25 654.6 L812.5 656.38 L812.75 657.53 L813 658.26 L813.25 658.74 L813.5 659.04 L813.75 659.24 L814.25 659.44 L822 659.59 L822.25 663.9 L822.5 666.67 L822.75 668.45 L823 669.6 L823.25 670.33 L823.5 670.81 L823.75 671.11 L824 671.31 L824.5 671.51 L832.25 671.66 L832.5 675.97 L832.75 678.74 L833 680.52 L833.25 681.67 L833.5 682.4 L833.75 682.88 L834 683.18 L834.25 683.38 L834.75 683.58 L842.5 683.73 L842.75 688.04 L843 690.81 L843.25 692.59 L843.5 693.74 L843.75 694.47 L844 694.95 L844.25 695.25 L844.5 695.45 L845 695.65 L880.25 695.8 L880.5 691.49 L880.75 688.72 L881 686.94 L881.25 685.79 L881.5 685.06 L881.75 684.58 L882 684.28 L882.25 684.08 L882.75 683.88 L893 683.73 L893.25 679.42 L893.5 676.65 L893.75 674.87 L894 673.72 L894.25 672.99 L894.5 672.51 L894.75 672.21 L895 672.01 L895.5 671.81 L904.5 671.66 L904.75 667.35 L905 664.58 L905.25 662.8 L905.5 661.65 L905.75 660.92 L906 660.44 L906.25 660.14 L906.5 659.94 L907 659.74 L915.5 659.59 L915.75 655.28 L916 652.51 L916.25 650.73 L916.5 649.58 L916.75 648.85 L917 648.37 L917.25 648.07 L917.5 647.87 L918 647.67 L926 647.52 L926.25 643.21 L926.5 640.44 L926.75 638.66 L927 637.51 L927.25 636.78 L927.5 636.3 L927.75 636 L928 635.8 L928.5 635.6 L937 635.45 L937.25 631.14 L937.5 628.37 L937.75 626.59 L938 625.44 L938.25 624.71 L938.5 624.23 L938.75 623.93 L939 623.73 L939.5 623.53 L963 623.38 L963.25 627.69 L963.5 630.46 L963.75 632.24 L964 633.39 L964.25 634.12 L964.5 634.6 L964.75 634.9 L965 635.1 L965.5 635.3 L977.25 635.45 L977.5 639.76 L977.75 642.53 L978 644.31 L978.25 645.46 L978.5 646.19 L978.75 646.67 L979 646.97 L979.25 647.17 L979.75 647.37 L989 647.52 L989.25 651.83 L989.5 654.6 L989.75 656.38 L990 657.53 L990.25 658.26 L990.5 658.74 L990.75 659.04 L991 659.24 L991.5 659.44 L1000 659.59 L1000.25 663.9 L1000.5 666.67 L1000.75 668.45 L1001 669.6 L1001.25 670.33 L1001.5 670.81 L1001.75 671.11 L1002 671.31 L1002.5 671.51 L1010.75 671.66 L1011 675.97 L1011.25 678.74 L1011.5 680.52 L1011.75 681.67 L1012 682.4 L1012.25 682.88 L1012.5 683.18 L1012.75 683.38 L1013.25 683.58 L1021.25 683.73 L1021.5 688.04 L1021.75 690.81 L1022 692.59 L1022.25 693.74 L1022.5 694.47 L1022.75 694.95 L1023 695.25 L1023.25 695.45 L1023.75 695.65 L1031.5 695.8 L1031.75 700.11 L1032 702.88 L1032.25 704.66 L1032.5 705.81 L1032.75 706.54 L1033 707.02 L1033.25 707.32 L1033.5 707.52 L1034 707.72 L1042 707.87 L1042.25 712.18 L1042.5 714.95 L1042.75 716.73 L1043 717.88 L1043.25 718.61 L1043.5 719.09 L1043.75 719.39 L1044 719.59 L1044.5 719.79 L1052.25 719.94 L1052.5 724.25 L1052.75 727.02 L1053 728.8 L1053.25 729.95 L1053.5 730.68 L1053.75 731.16 L1054 731.46 L1054.25 731.66 L1054.75 731.86 L1062.5 732.01 L1062.75 736.32 L1063 739.09 L1063.25 740.87 L1063.5 742.02 L1063.75 742.75 L1064 743.23 L1064.25 743.53 L1064.5 743.73 L1065 743.93 L1072.75 744.08 L1073 748.39 L1073.25 751.16 L1073.5 752.94 L1073.75 754.09 L1074 754.82 L1074.25 755.3 L1074.5 755.6 L1074.75 755.8 L1075.25 756 L1083 756.15 L1083.25 760.46 L1083.5 763.23 L1083.75 765.01 L1084 766.16 L1084.25 766.89 L1084.5 767.37 L1084.75 767.67 L1085 767.87 L1085.5 768.07 L1093.25 768.22 L1093.5 772.53 L1093.75 775.3 L1094 777.08 L1094.25 778.23 L1094.5 778.96 L1094.75 779.44 L1095 779.74 L1095.25 779.94 L1095.75 780.14 L1103.5 780.29 L1103.75 784.6 L1104 787.37 L1104.25 789.15 L1104.5 790.3 L1104.75 791.03 L1105 791.51 L1105.25 791.81 L1105.5 792.01 L1106 792.21 L1113.75 792.36 L1114 796.67 L1114.25 799.44 L1114.5 801.22 L1114.75 802.37 L1115 803.1 L1115.25 803.58 L1115.5 803.88 L1115.75 804.08 L1116.25 804.28 L1129.5 804.43 L1129.75 808.74 L1130 811.51 L1130.25 813.29 L1130.5 814.44 L1130.75 815.17 L1131 815.65 L1131.25 815.95 L1131.5 816.15 L1132 816.35 L1248.5 816.5" fill="none" stroke="#30e030" stroke-width="1.6" stroke-linejoin="round"/><path d="M124.5 828.4 L393.75 787.5 L573.7 510.8 L663.9 510.8 L843.3 722.4 L933.2 617.7 L1112.6 828.6 L1248.5 828.6" fill="none" stroke="#f4f060" stroke-width="1.6" stroke-linejoin="round"/><path d="M124.5 829.19 L125.5 829.14 L126.5 829.09 L127.5 829.03 L128.5 828.96 L129.5 828.89 L130.5 828.82 L131.5 828.74 L132.5 828.66 L133.5 828.58 L134.5 828.49 L135.5 828.39 L136.5 828.3 L137.5 828.2 L138.5 828.1 L139.5 827.99 L140.5 827.89 L141.5 827.78 L142.5 827.67 L143.5 827.55 L144.5 827.44 L145.5 827.32 L146.5 827.2 L147.5 827.08 L148.5 826.95 L149.5 826.83 L150.5 826.7 L151.5 826.57 L152.5 826.44 L153.5 826.31 L154.5 826.18 L155.5 826.05 L156.5 825.92 L157.5 825.78 L158.5 825.65 L159.5 825.51 L160.5 825.37 L161.5 825.24 L162.5 825.1 L163.5 824.96 L164.5 824.82 L165.5 824.68 L166.5 824.53 L167.5 824.39 L168.5 824.25 L169.5 824.11 L170.5 823.96 L171.5 823.82 L172.5 823.67 L173.5 823.53 L174.5 823.38 L175.5 823.24 L176.5 823.09 L177.5 822.95 L178.5 822.8 L179.5 822.65 L180.5 822.51 L181.5 822.36 L182.5 822.21 L183.5 822.06 L184.5 821.92 L185.5 821.77 L186.5 821.62 L187.5 821.47 L188.5 821.32 L189.5 821.17 L190.5 821.02 L191.5 820.87 L192.5 820.72 L193.5 820.57 L194.5 820.43 L195.5 820.28 L196.5 820.13 L197.5 819.98 L198.5 819.83 L199.5 819.67 L200.5 819.52 L201.5 819.37 L202.5 819.22 L203.5 819.07 L204.5 818.92 L205.5 818.77 L206.5 818.62 L207.5 818.47 L208.5 818.32 L209.5 818.17 L210.5 818.02 L211.5 817.87 L212.5 817.71 L213.5 817.56 L214.5 817.41 L215.5 817.26 L216.5 817.11 L217.5 816.96 L218.5 816.81 L219.5 816.66 L220.5 816.5 L221.5 816.35 L222.5 816.2 L223.5 816.05 L224.5 815.9 L225.5 815.75 L226.5 815.6 L227.5 815.44 L228.5 815.29 L229.5 815.14 L230.5 814.99 L231.5 814.84 L232.5 814.69 L233.5 814.53 L234.5 814.38 L235.5 814.23 L236.5 814.08 L237.5 813.93 L238.5 813.78 L239.5 813.62 L240.5 813.47 L241.5 813.32 L242.5 813.17 L243.5 813.02 L244.5 812.87 L245.5 812.71 L246.5 812.56 L247.5 812.41 L248.5 812.26 L249.5 812.11 L250.5 811.95 L251.5 811.8 L252.5 811.65 L253.5 811.5 L254.5 811.35 L255.5 811.2 L256.5 811.04 L257.5 810.89 L258.5 810.74 L259.5 810.59 L260.5 810.44 L261.5 810.28 L262.5 810.13 L263.5 809.98 L264.5 809.83 L265.5 809.68 L266.5 809.53 L267.5 809.37 L268.5 809.22 L269.5 809.07 L270.5 808.92 L271.5 808.77 L272.5 808.61 L273.5 808.46 L274.5 808.31 L275.5 808.16 L276.5 808.01 L277.5 807.85 L278.5 807.7 L279.5 807.55 L280.5 807.4 L281.5 807.25 L282.5 807.1 L283.5 806.94 L284.5 806.79 L285.5 806.64 L286.5 806.49 L287.5 806.34 L288.5 806.18 L289.5 806.03 L290.5 805.88 L291.5 805.73 L292.5 805.58 L293.5 805.42 L294.5 805.27 L295.5 805.12 L296.5 804.97 L297.5 804.82 L298.5 804.66 L299.5 804.51 L300.5 804.36 L301.5 804.21 L302.5 804.06 L303.5 803.91 L304.5 803.75 L305.5 803.6 L306.5 803.45 L307.5 803.3 L308.5 803.15 L309.5 802.99 L310.5 802.84 L311.5 802.69 L312.5 802.54 L313.5 802.39 L314.5 802.23 L315.5 802.08 L316.5 801.93 L317.5 801.78 L318.5 801.63 L319.5 801.48 L320.5 801.32 L321.5 801.17 L322.5 801.02 L323.5 800.87 L324.5 800.72 L325.5 800.56 L326.5 800.41 L327.5 800.26 L328.5 800.11 L329.5 799.96 L330.5 799.8 L331.5 799.65 L332.5 799.5 L333.5 799.35 L334.5 799.2 L335.5 799.04 L336.5 798.89 L337.5 798.74 L338.5 798.59 L339.5 798.44 L340.5 798.29 L341.5 798.13 L342.5 797.98 L343.5 797.83 L344.5 797.68 L345.5 797.53 L346.5 797.37 L347.5 797.22 L348.5 797.07 L349.5 796.92 L350.5 796.77 L351.5 796.61 L352.5 796.46 L353.5 796.31 L354.5 796.16 L355.5 796.01 L356.5 795.85 L357.5 795.7 L358.5 795.55 L359.5 795.4 L360.5 795.25 L361.5 795.1 L362.5 794.94 L363.5 794.79 L364.5 794.64 L365.5 794.49 L366.5 794.34 L367.5 794.18 L368.5 794.03 L369.5 793.88 L370.5 793.73 L371.5 793.58 L372.5 793.42 L373.5 793.27 L374.5 793.12 L375.5 792.97 L376.5 792.82 L377.5 792.66 L378.5 792.51 L379.5 792.36 L380.5 792.21 L381.5 792.06 L382.5 791.91 L383.5 791.75 L384.5 791.6 L385.5 791.45 L386.5 791.3 L387.5 791.15 L388.5 790.99 L389.5 790.84 L390.5 790.69 L391.5 790.54 L392.5 790.39 L393.5 790.23 L394.5 790.05 L395.5 789.8 L396.5 789.48 L397.5 789.09 L398.5 788.63 L399.5 788.12 L400.5 787.55 L401.5 786.93 L402.5 786.26 L403.5 785.55 L404.5 784.78 L405.5 783.98 L406.5 783.14 L407.5 782.25 L408.5 781.34 L409.5 780.38 L410.5 779.4 L411.5 778.39 L412.5 777.35 L413.5 776.28 L414.5 775.18 L415.5 774.06 L416.5 772.92 L417.5 771.76 L418.5 770.58 L419.5 769.37 L420.5 768.15 L421.5 766.92 L422.5 765.66 L423.5 764.39 L424.5 763.11 L425.5 761.81 L426.5 760.5 L427.5 759.17 L428.5 757.84 L429.5 756.49 L430.5 755.14 L431.5 753.77 L432.5 752.39 L433.5 751.01 L434.5 749.62 L435.5 748.22 L436.5 746.81 L437.5 745.39 L438.5 743.97 L439.5 742.54 L440.5 741.11 L441.5 739.67 L442.5 738.22 L443.5 736.77 L444.5 735.32 L445.5 733.86 L446.5 732.4 L447.5 730.93 L448.5 729.46 L449.5 727.98 L450.5 726.5 L451.5 725.02 L452.5 723.54 L453.5 722.05 L454.5 720.56 L455.5 719.07 L456.5 717.57 L457.5 716.07 L458.5 714.57 L459.5 713.07 L460.5 711.57 L461.5 710.06 L462.5 708.55 L463.5 707.05 L464.5 705.53 L465.5 704.02 L466.5 702.51 L467.5 700.99 L468.5 699.48 L469.5 697.96 L470.5 696.44 L471.5 694.92 L472.5 693.4 L473.5 691.88 L474.5 690.36 L475.5 688.84 L476.5 687.31 L477.5 685.79 L478.5 684.26 L479.5 682.74 L480.5 681.21 L481.5 679.68 L482.5 678.16 L483.5 676.63 L484.5 675.1 L485.5 673.57 L486.5 672.04 L487.5 670.51 L488.5 668.98 L489.5 667.45 L490.5 665.92 L491.5 664.38 L492.5 662.85 L493.5 661.32 L494.5 659.79 L495.5 658.25 L496.5 656.72 L497.5 655.19 L498.5 653.65 L499.5 652.12 L500.5 650.59 L501.5 649.05 L502.5 647.52 L503.5 645.98 L504.5 644.45 L505.5 642.91 L506.5 641.38 L507.5 639.84 L508.5 638.31 L509.5 636.77 L510.5 635.24 L511.5 633.7 L512.5 632.17 L513.5 630.63 L514.5 629.09 L515.5 627.56 L516.5 626.02 L517.5 624.48 L518.5 622.95 L519.5 621.41 L520.5 619.88 L521.5 618.34 L522.5 616.8 L523.5 615.27 L524.5 613.73 L525.5 612.19 L526.5 610.66 L527.5 609.12 L528.5 607.58 L529.5 606.04 L530.5 604.51 L531.5 602.97 L532.5 601.43 L533.5 599.9 L534.5 598.36 L535.5 596.82 L536.5 595.29 L537.5 593.75 L538.5 592.21 L539.5 590.67 L540.5 589.14 L541.5 587.6 L542.5 586.06 L543.5 584.52 L544.5 582.99 L545.5 581.45 L546.5 579.91 L547.5 578.38 L548.5 576.84 L549.5 575.3 L550.5 573.76 L551.5 572.23 L552.5 570.69 L553.5 569.15 L554.5 567.61 L555.5 566.08 L556.5 564.54 L557.5 563 L558.5 561.46 L559.5 559.93 L560.5 558.39 L561.5 556.85 L562.5 555.31 L563.5 553.78 L564.5 552.24 L565.5 550.7 L566.5 549.16 L567.5 547.63 L568.5 546.09 L569.5 544.55 L570.5 543.01 L571.5 541.47 L572.5 539.94 L573.5 538.4 L574.5 536.9 L575.5 535.48 L576.5 534.14 L577.5 532.87 L578.5 531.67 L579.5 530.53 L580.5 529.46 L581.5 528.44 L582.5 527.48 L583.5 526.57 L584.5 525.72 L585.5 524.9 L586.5 524.14 L587.5 523.41 L588.5 522.72 L589.5 522.08 L590.5 521.46 L591.5 520.88 L592.5 520.33 L593.5 519.82 L594.5 519.32 L595.5 518.86 L596.5 518.42 L597.5 518.01 L598.5 517.62 L599.5 517.24 L600.5 516.89 L601.5 516.56 L602.5 516.25 L603.5 515.95 L604.5 515.67 L605.5 515.41 L606.5 515.16 L607.5 514.92 L608.5 514.7 L609.5 514.48 L610.5 514.28 L611.5 514.09 L612.5 513.91 L613.5 513.74 L614.5 513.58 L615.5 513.43 L616.5 513.29 L617.5 513.15 L618.5 513.03 L619.5 512.91 L620.5 512.79 L621.5 512.68 L622.5 512.58 L623.5 512.48 L624.5 512.39 L625.5 512.3 L626.5 512.22 L627.5 512.15 L628.5 512.07 L629.5 512 L630.5 511.94 L631.5 511.88 L632.5 511.82 L633.5 511.76 L634.5 511.71 L635.5 511.66 L636.5 511.61 L637.5 511.57 L638.5 511.53 L639.5 511.49 L640.5 511.45 L641.5 511.41 L642.5 511.38 L643.5 511.35 L644.5 511.32 L645.5 511.29 L646.5 511.26 L647.5 511.24 L648.5 511.22 L649.5 511.19 L650.5 511.17 L651.5 511.15 L652.5 511.13 L653.5 511.11 L654.5 511.1 L655.5 511.08 L656.5 511.07 L657.5 511.05 L658.5 511.04 L659.5 511.02 L660.5 511.01 L661.5 511 L662.5 510.99 L663.5 510.98 L664.5 510.99 L665.5 511.06 L666.5 511.18 L667.5 511.37 L668.5 511.61 L669.5 511.9 L670.5 512.24 L671.5 512.63 L672.5 513.06 L673.5 513.53 L674.5 514.03 L675.5 514.58 L676.5 515.16 L677.5 515.77 L678.5 516.41 L679.5 517.08 L680.5 517.78 L681.5 518.51 L682.5 519.26 L683.5 520.03 L684.5 520.83 L685.5 521.65 L686.5 522.48 L687.5 523.34 L688.5 524.21 L689.5 525.1 L690.5 526.01 L691.5 526.93 L692.5 527.86 L693.5 528.81 L694.5 529.77 L695.5 530.74 L696.5 531.72 L697.5 532.72 L698.5 533.72 L699.5 534.74 L700.5 535.76 L701.5 536.79 L702.5 537.83 L703.5 538.88 L704.5 539.93 L705.5 540.99 L706.5 542.06 L707.5 543.13 L708.5 544.21 L709.5 545.3 L710.5 546.39 L711.5 547.48 L712.5 548.58 L713.5 549.68 L714.5 550.79 L715.5 551.9 L716.5 553.02 L717.5 554.14 L718.5 555.26 L719.5 556.38 L720.5 557.51 L721.5 558.64 L722.5 559.78 L723.5 560.91 L724.5 562.05 L725.5 563.19 L726.5 564.34 L727.5 565.48 L728.5 566.63 L729.5 567.78 L730.5 568.93 L731.5 570.08 L732.5 571.23 L733.5 572.39 L734.5 573.54 L735.5 574.7 L736.5 575.86 L737.5 577.02 L738.5 578.18 L739.5 579.34 L740.5 580.5 L741.5 581.67 L742.5 582.83 L743.5 584 L744.5 585.16 L745.5 586.33 L746.5 587.5 L747.5 588.67 L748.5 589.83 L749.5 591 L750.5 592.17 L751.5 593.34 L752.5 594.52 L753.5 595.69 L754.5 596.86 L755.5 598.03 L756.5 599.2 L757.5 600.38 L758.5 601.55 L759.5 602.72 L760.5 603.9 L761.5 605.07 L762.5 606.25 L763.5 607.42 L764.5 608.6 L765.5 609.77 L766.5 610.95 L767.5 612.12 L768.5 613.3 L769.5 614.48 L770.5 615.65 L771.5 616.83 L772.5 618 L773.5 619.18 L774.5 620.36 L775.5 621.54 L776.5 622.71 L777.5 623.89 L778.5 625.07 L779.5 626.25 L780.5 627.42 L781.5 628.6 L782.5 629.78 L783.5 630.96 L784.5 632.14 L785.5 633.31 L786.5 634.49 L787.5 635.67 L788.5 636.85 L789.5 638.03 L790.5 639.2 L791.5 640.38 L792.5 641.56 L793.5 642.74 L794.5 643.92 L795.5 645.1 L796.5 646.28 L797.5 647.46 L798.5 648.63 L799.5 649.81 L800.5 650.99 L801.5 652.17 L802.5 653.35 L803.5 654.53 L804.5 655.71 L805.5 656.89 L806.5 658.07 L807.5 659.25 L808.5 660.42 L809.5 661.6 L810.5 662.78 L811.5 663.96 L812.5 665.14 L813.5 666.32 L814.5 667.5 L815.5 668.68 L816.5 669.86 L817.5 671.04 L818.5 672.22 L819.5 673.4 L820.5 674.58 L821.5 675.75 L822.5 676.93 L823.5 678.11 L824.5 679.29 L825.5 680.47 L826.5 681.65 L827.5 682.83 L828.5 684.01 L829.5 685.19 L830.5 686.37 L831.5 687.55 L832.5 688.73 L833.5 689.91 L834.5 691.09 L835.5 692.27 L836.5 693.44 L837.5 694.62 L838.5 695.8 L839.5 696.98 L840.5 698.16 L841.5 699.34 L842.5 700.52 L843.5 701.69 L844.5 702.77 L845.5 703.72 L846.5 704.56 L847.5 705.29 L848.5 705.91 L849.5 706.44 L850.5 706.87 L851.5 707.22 L852.5 707.49 L853.5 707.68 L854.5 707.79 L855.5 707.84 L856.5 707.82 L857.5 707.73 L858.5 707.59 L859.5 707.4 L860.5 707.15 L861.5 706.85 L862.5 706.5 L863.5 706.11 L864.5 705.67 L865.5 705.2 L866.5 704.69 L867.5 704.14 L868.5 703.56 L869.5 702.95 L870.5 702.31 L871.5 701.64 L872.5 700.94 L873.5 700.22 L874.5 699.47 L875.5 698.7 L876.5 697.91 L877.5 697.1 L878.5 696.27 L879.5 695.42 L880.5 694.56 L881.5 693.67 L882.5 692.78 L883.5 691.86 L884.5 690.94 L885.5 690 L886.5 689.05 L887.5 688.09 L888.5 687.11 L889.5 686.13 L890.5 685.13 L891.5 684.13 L892.5 683.12 L893.5 682.1 L894.5 681.07 L895.5 680.04 L896.5 678.99 L897.5 677.94 L898.5 676.89 L899.5 675.83 L900.5 674.76 L901.5 673.69 L902.5 672.61 L903.5 671.53 L904.5 670.44 L905.5 669.35 L906.5 668.26 L907.5 667.16 L908.5 666.05 L909.5 664.95 L910.5 663.84 L911.5 662.73 L912.5 661.61 L913.5 660.5 L914.5 659.38 L915.5 658.25 L916.5 657.13 L917.5 656 L918.5 654.87 L919.5 653.74 L920.5 652.61 L921.5 651.47 L922.5 650.34 L923.5 649.2 L924.5 648.06 L925.5 646.92 L926.5 645.78 L927.5 644.64 L928.5 643.49 L929.5 642.35 L930.5 641.2 L931.5 640.05 L932.5 638.9 L933.5 637.77 L934.5 636.73 L935.5 635.82 L936.5 635.02 L937.5 634.33 L938.5 633.74 L939.5 633.25 L940.5 632.85 L941.5 632.53 L942.5 632.29 L943.5 632.13 L944.5 632.05 L945.5 632.03 L946.5 632.08 L947.5 632.19 L948.5 632.35 L949.5 632.57 L950.5 632.85 L951.5 633.17 L952.5 633.54 L953.5 633.95 L954.5 634.41 L955.5 634.9 L956.5 635.43 L957.5 636 L958.5 636.6 L959.5 637.23 L960.5 637.89 L961.5 638.57 L962.5 639.29 L963.5 640.03 L964.5 640.79 L965.5 641.58 L966.5 642.39 L967.5 643.21 L968.5 644.06 L969.5 644.92 L970.5 645.8 L971.5 646.7 L972.5 647.61 L973.5 648.54 L974.5 649.48 L975.5 650.43 L976.5 651.4 L977.5 652.37 L978.5 653.36 L979.5 654.36 L980.5 655.37 L981.5 656.38 L982.5 657.41 L983.5 658.44 L984.5 659.48 L985.5 660.53 L986.5 661.58 L987.5 662.65 L988.5 663.71 L989.5 664.79 L990.5 665.87 L991.5 666.95 L992.5 668.04 L993.5 669.14 L994.5 670.23 L995.5 671.34 L996.5 672.44 L997.5 673.55 L998.5 674.67 L999.5 675.79 L1000.5 676.91 L1001.5 678.03 L1002.5 679.16 L1003.5 680.29 L1004.5 681.42 L1005.5 682.55 L1006.5 683.69 L1007.5 684.83 L1008.5 685.97 L1009.5 687.11 L1010.5 688.25 L1011.5 689.4 L1012.5 690.55 L1013.5 691.69 L1014.5 692.85 L1015.5 694 L1016.5 695.15 L1017.5 696.3 L1018.5 697.46 L1019.5 698.62 L1020.5 699.77 L1021.5 700.93 L1022.5 702.09 L1023.5 703.25 L1024.5 704.41 L1025.5 705.58 L1026.5 706.74 L1027.5 707.9 L1028.5 709.07 L1029.5 710.23 L1030.5 711.4 L1031.5 712.56 L1032.5 713.73 L1033.5 714.9 L1034.5 716.06 L1035.5 717.23 L1036.5 718.4 L1037.5 719.57 L1038.5 720.74 L1039.5 721.91 L1040.5 723.08 L1041.5 724.25 L1042.5 725.42 L1043.5 726.59 L1044.5 727.76 L1045.5 728.93 L1046.5 730.1 L1047.5 731.27 L1048.5 732.44 L1049.5 733.62 L1050.5 734.79 L1051.5 735.96 L1052.5 737.13 L1053.5 738.31 L1054.5 739.48 L1055.5 740.65 L1056.5 741.82 L1057.5 743 L1058.5 744.17 L1059.5 745.35 L1060.5 746.52 L1061.5 747.69 L1062.5 748.87 L1063.5 750.04 L1064.5 751.21 L1065.5 752.39 L1066.5 753.56 L1067.5 754.74 L1068.5 755.91 L1069.5 757.09 L1070.5 758.26 L1071.5 759.43 L1072.5 760.61 L1073.5 761.78 L1074.5 762.96 L1075.5 764.13 L1076.5 765.31 L1077.5 766.48 L1078.5 767.66 L1079.5 768.83 L1080.5 770.01 L1081.5 771.18 L1082.5 772.36 L1083.5 773.53 L1084.5 774.71 L1085.5 775.88 L1086.5 777.06 L1087.5 778.23 L1088.5 779.41 L1089.5 780.58 L1090.5 781.76 L1091.5 782.93 L1092.5 784.11 L1093.5 785.28 L1094.5 786.46 L1095.5 787.64 L1096.5 788.81 L1097.5 789.99 L1098.5 791.16 L1099.5 792.34 L1100.5 793.51 L1101.5 794.69 L1102.5 795.86 L1103.5 797.04 L1104.5 798.21 L1105.5 799.39 L1106.5 800.56 L1107.5 801.74 L1108.5 802.92 L1109.5 804.09 L1110.5 805.27 L1111.5 806.44 L1112.5 807.62 L1113.5 808.76 L1114.5 809.84 L1115.5 810.86 L1116.5 811.82 L1117.5 812.74 L1118.5 813.6 L1119.5 814.42 L1120.5 815.19 L1121.5 815.92 L1122.5 816.61 L1123.5 817.26 L1124.5 817.88 L1125.5 818.46 L1126.5 819.01 L1127.5 819.53 L1128.5 820.03 L1129.5 820.49 L1130.5 820.93 L1131.5 821.35 L1132.5 821.75 L1133.5 822.12 L1134.5 822.47 L1135.5 822.81 L1136.5 823.12 L1137.5 823.42 L1138.5 823.7 L1139.5 823.97 L1140.5 824.22 L1141.5 824.46 L1142.5 824.68 L1143.5 824.9 L1144.5 825.1 L1145.5 825.29 L1146.5 825.47 L1147.5 825.64 L1148.5 825.8 L1149.5 825.95 L1150.5 826.1 L1151.5 826.23 L1152.5 826.36 L1153.5 826.48 L1154.5 826.6 L1155.5 826.71 L1156.5 826.81 L1157.5 826.91 L1158.5 827 L1159.5 827.09 L1160.5 827.17 L1161.5 827.25 L1162.5 827.32 L1163.5 827.39 L1164.5 827.46 L1165.5 827.52 L1166.5 827.58 L1167.5 827.63 L1168.5 827.69 L1169.5 827.74 L1170.5 827.78 L1171.5 827.83 L1172.5 827.87 L1173.5 827.91 L1174.5 827.95 L1175.5 827.98 L1176.5 828.02 L1177.5 828.05 L1178.5 828.08 L1179.5 828.11 L1180.5 828.13 L1181.5 828.16 L1182.5 828.18 L1183.5 828.2 L1184.5 828.23 L1185.5 828.25 L1186.5 828.27 L1187.5 828.28 L1188.5 828.3 L1189.5 828.32 L1190.5 828.33 L1191.5 828.35 L1192.5 828.36 L1193.5 828.37 L1194.5 828.39 L1195.5 828.4 L1196.5 828.41 L1197.5 828.42 L1198.5 828.43 L1199.5 828.44 L1200.5 828.45 L1201.5 828.46 L1202.5 828.46 L1203.5 828.47 L1204.5 828.48 L1205.5 828.48 L1206.5 828.49 L1207.5 828.5 L1208.5 828.5 L1209.5 828.51 L1210.5 828.51 L1211.5 828.52 L1212.5 828.52 L1213.5 828.53 L1214.5 828.53 L1215.5 828.53 L1216.5 828.54 L1217.5 828.54 L1218.5 828.54 L1219.5 828.55 L1220.5 828.55 L1221.5 828.55 L1222.5 828.56 L1223.5 828.56 L1224.5 828.56 L1225.5 828.56 L1226.5 828.56 L1227.5 828.57 L1228.5 828.57 L1229.5 828.57 L1230.5 828.57 L1231.5 828.57 L1232.5 828.57 L1233.5 828.58 L1234.5 828.58 L1235.5 828.58 L1236.5 828.58 L1237.5 828.58 L1238.5 828.58 L1239.5 828.58 L1240.5 828.58 L1241.5 828.58 L1242.5 828.59 L1243.5 828.59 L1244.5 828.59 L1245.5 828.59 L1246.5 828.59 L1247.5 828.59 L1248.5 828.59" fill="none" stroke="#40dce4" stroke-width="1.9" stroke-linejoin="round"/></svg></div>
<div class="hl" style="top:949px;height:2px;background:#fff"></div><svg width="1280" height="24" viewBox="0 950 1280 24" style="left:0;top:950px"><path d="M2 955.500h9l4.500 14.500h89l4-14.500h1172" fill="none" stroke="#000" stroke-width="1.200"/><text x="17" y="967" font-family="Liberation Sans" font-size="12" fill="#000" textLength="84" lengthAdjust="spacingAndGlyphs">Transient Analysis</text></svg><div class="hl" style="top:974px;background:#aca899"></div><div class="hl" style="top:975px;background:#fff"></div><div style="left:0;top:977px;width:50px;height:17px;border-right:1px solid #aca899;"></div><div style="left:52px;top:977px;width:1228px;height:17px;border-left:1px solid #aca899;border-top:1px solid #aca899"></div><div style="left:0;top:977px;width:50px;height:1px;background:#aca899"></div><div id="task"><div id="start"><svg width="20" height="18" viewBox="0 0 20 18" style="left:10px;top:6px"><path d="M1 3.500c2.500-1.500 5-1.500 7.500 0l-1.500 5c-2.500-1.500-5-1.500-7.500 0z" fill="#e8552a"/><path d="M9.500 4c2.500 1.500 5 1.500 7.500 0l-1.500 5c-2.500 1.500-5 1.500-7.500 0z" fill="#7cc142"/><path d="M-.500 9.500c2.500-1.500 5-1.500 7.500 0l-1.500 5c-2.500-1.500-5-1.500-7.500 0z" fill="#3f7fe0"/><path d="M8 10c2.500 1.500 5 1.500 7.500 0l-1.500 5c-2.500 1.500-5 1.500-7.500 0z" fill="#f3c12a"/></svg><span class="st">Start</span></div><div class="tbtn" style="left:108px;width:159px;background:linear-gradient(to bottom,#1b46a8,#1f4fb6 25%,#2153bc 80%,#2459c8);box-shadow:0 0 0 1px #183f9c inset"><svg width="16" height="16" viewBox="0 0 16 16" style="left:10px;top:4px"><circle cx="8" cy="8" r="7" fill="#e8731e"/><circle cx="8.500" cy="7" r="4" fill="#3a4fb0"/><path d="M2 6c2-4 8-5 11-1-3-1-6 0-7 3s2 5 5 4c-3 3-9 1-9-6z" fill="#f09a28"/></svg><span style="left:31px;top:5px">[1] Hifi erősítők terve...</span></div><div class="tbtn" style="left:268px;width:159px;background:linear-gradient(to bottom,#5a96f8,#3d79ec 25%,#3a75e8 80%,#2f68d8);box-shadow:0 0 0 1px #336ade inset"><svg width="16" height="16" viewBox="0 0 16 16" style="left:10px;top:4px"><rect x="0" y="0" width="16" height="16" fill="#f4d8ee"/><rect x="1.500" y="1.500" width="13" height="13" fill="#fff" stroke="#b060a8" stroke-width="1"/><path d="M3 5h8M3 8h4M5 3v9M8 5v6" stroke="#503048" stroke-width="1" fill="none"/><circle cx="11.500" cy="4.500" r="2.200" fill="#d01818"/><circle cx="11.500" cy="11" r="2.200" fill="#1818b0"/><circle cx="5" cy="12" r="2" fill="#189018"/></svg><span style="left:29.500px;top:5px;letter-spacing:-0.400px">CircuitMaker</span></div><span style="left:1098px;top:9px;color:#fff;font-size:11.300px">HU</span><div id="tray"><svg width="92" height="22" viewBox="0 0 92 22" style="left:10px;top:4px"><path d="M2 13l4-3 2 4z" fill="#fff"/><path d="M6 10l8-7 3 3-9 8z" fill="#3a3a8a"/><path d="M7.500 10.500l7-6" stroke="#e03030" stroke-width="1.300"/><path d="M9 12l7-6" stroke="#30c030" stroke-width="1.300"/><path d="M8.200 11.200l7-6" stroke="#f0e040" stroke-width="1"/><path d="M5 17.500h11" stroke="#222" stroke-width="1.600"/><path d="M5 15.800h10" stroke="#e8e8e8" stroke-width="1.200"/><path d="M26 3l6 2v5.500c0 3.500-2.500 6-6 8-3.500-2-6-4.500-6-8v-5.500z" fill="#d02828" stroke="#f0d8d8" stroke-width="1.200"/><path d="M23.800 8.300l4.400 4.400M28.200 8.300l-4.400 4.400" stroke="#fff" stroke-width="1.600"/><path d="M37 8.500h3l5-4.500v14l-5-4.500h-3z" fill="#e89048" stroke="#40200c" stroke-width="0.900"/><path d="M47.500 5.500c2 3.500 2 8 0 11.500M50 4c2.500 4.500 2.500 10 0 14.500" stroke="#30343c" stroke-width="1.200" fill="none"/><circle cx="63" cy="9.500" r="6" fill="#9aa0a8" stroke="#50545c" stroke-width="1"/><circle cx="62" cy="9" r="2.600" fill="#e8eef4"/><circle cx="63.500" cy="10" r="1.200" fill="#d05028"/><path d="M66 15l5 2.500" stroke="#a8c4ec" stroke-width="2.400"/><ellipse cx="81" cy="11" rx="6" ry="8.500" fill="#1420c0"/><path d="M78 7.500l6 6.500-3 3v-12l3 3-6 6.500" fill="none" stroke="#e82828" stroke-width="1.500"/></svg><span style="left:106px;top:9px;color:#fff;font-size:11.300px">16:38</span></div></div>
</body></html>
